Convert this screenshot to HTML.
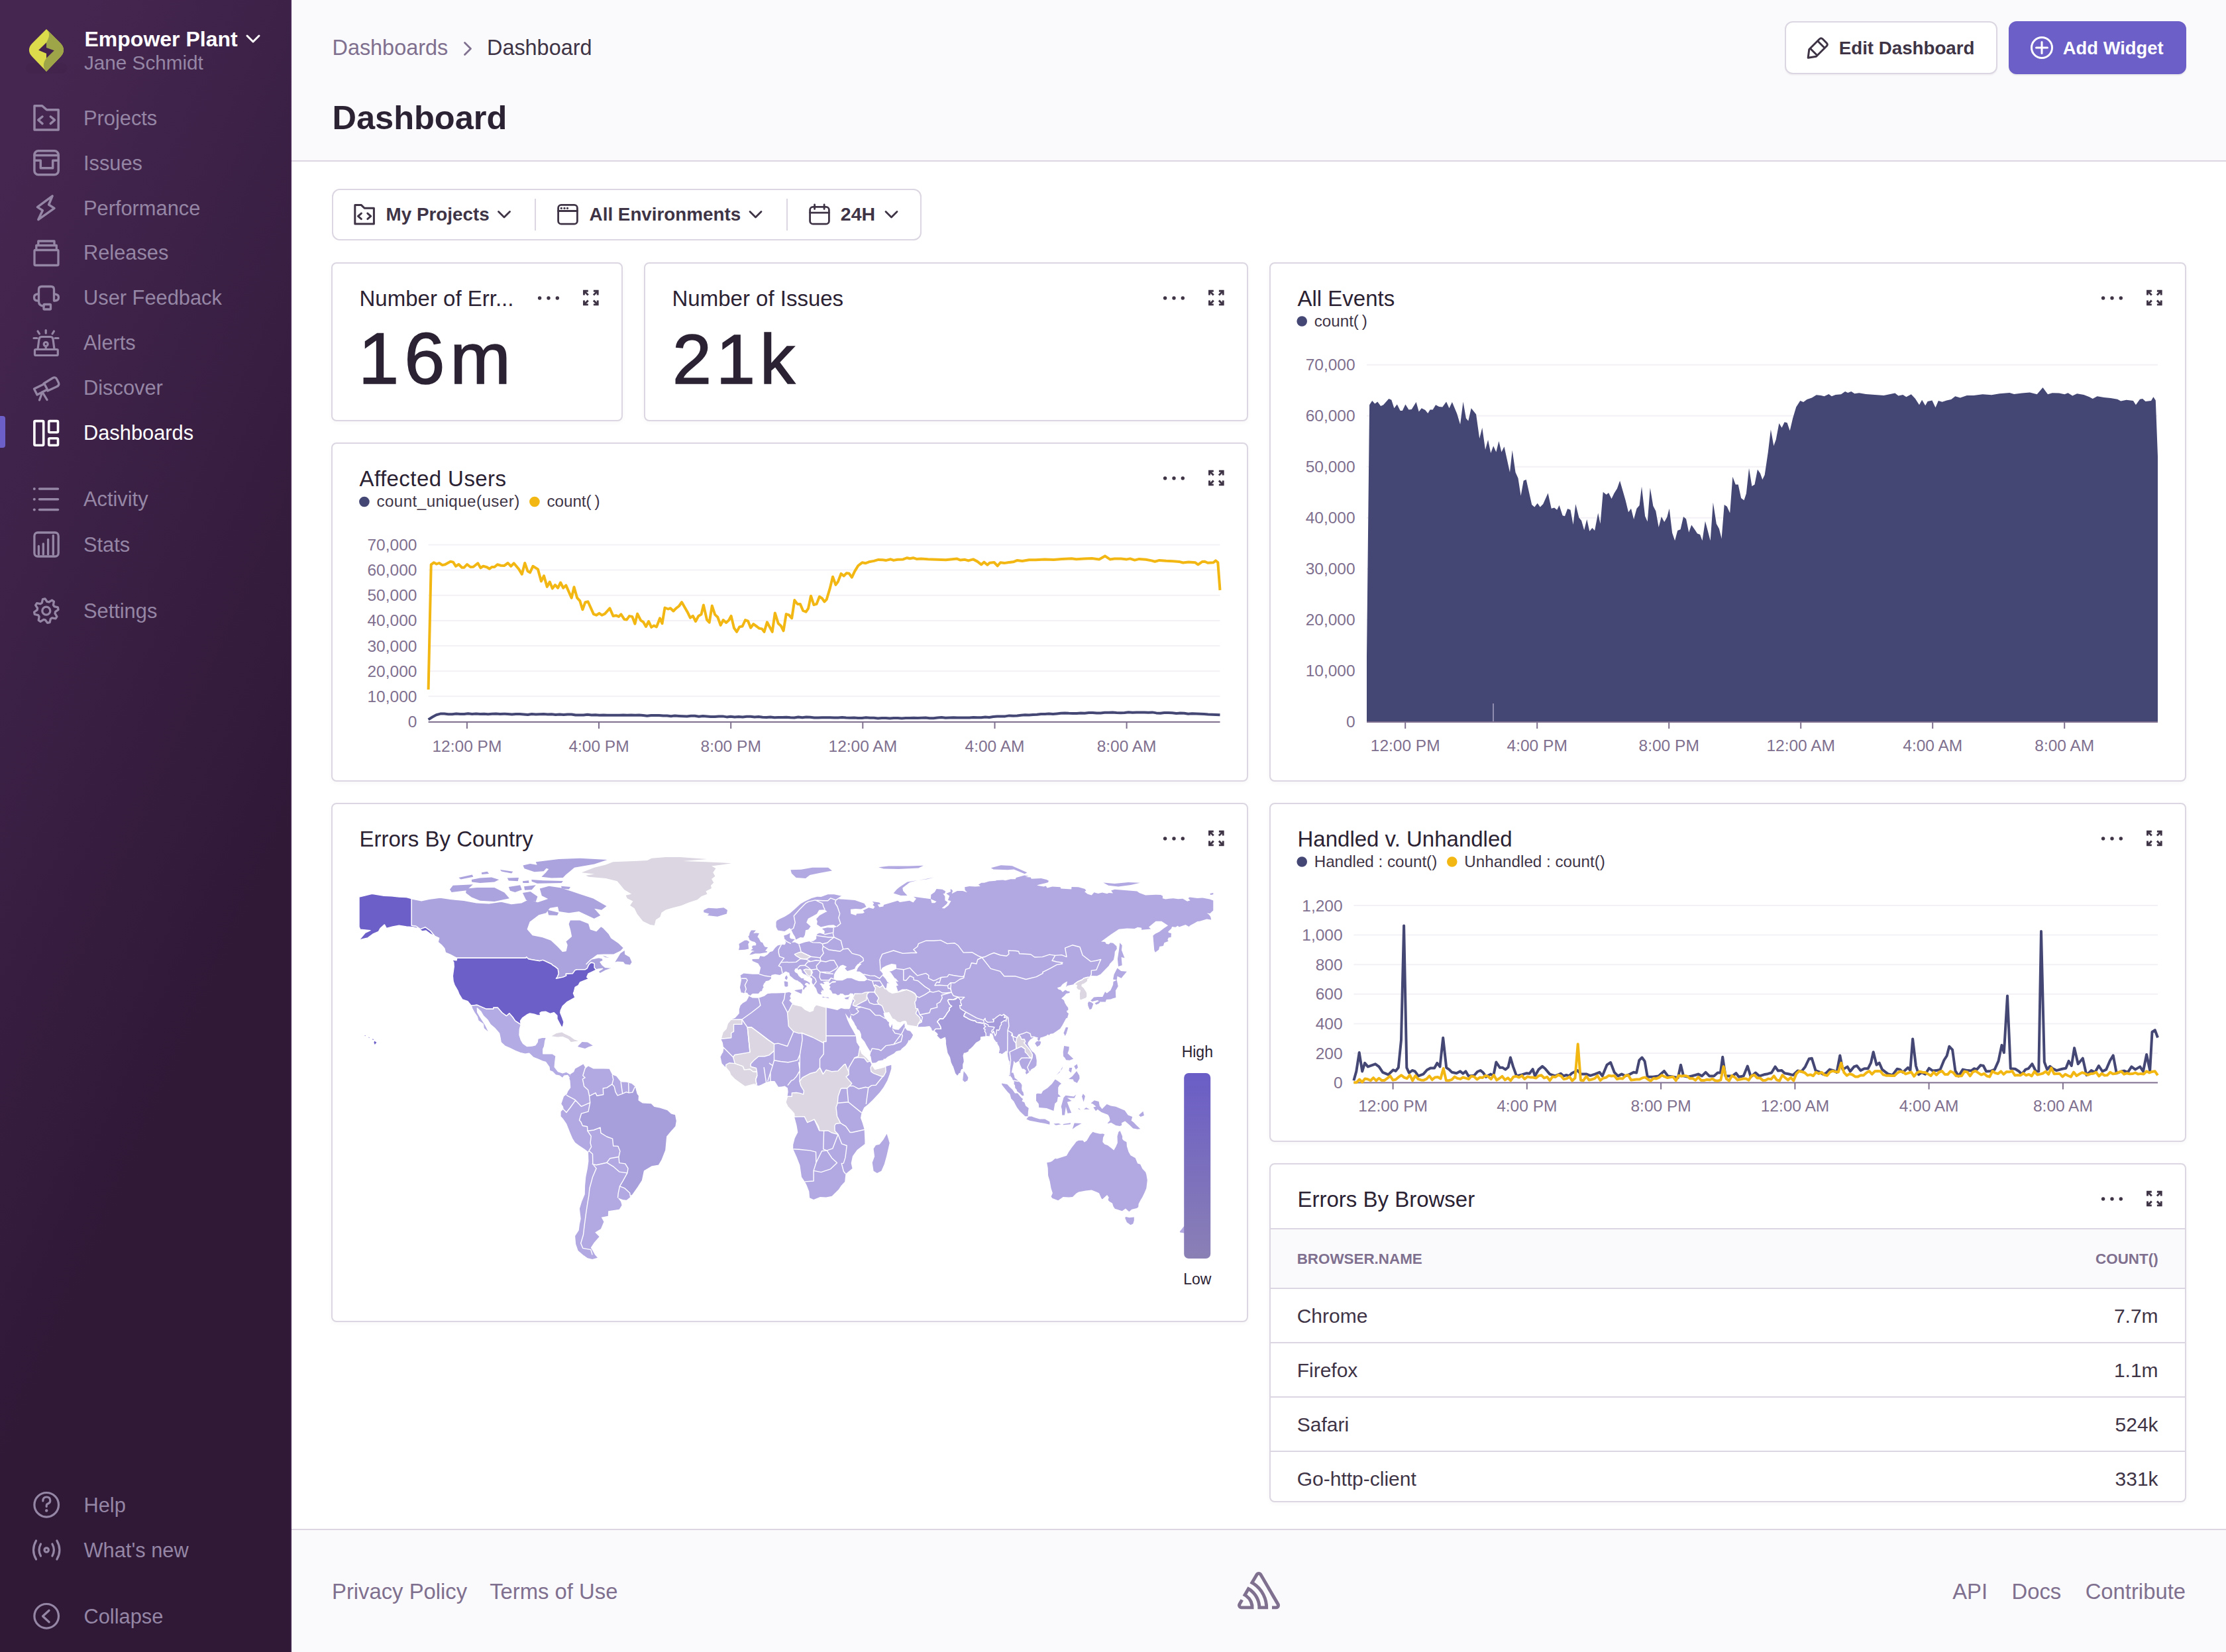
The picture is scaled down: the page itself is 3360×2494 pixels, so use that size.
<!DOCTYPE html><html><head><meta charset="utf-8"><style>
html,body{margin:0;padding:0;width:3360px;height:2494px;overflow:hidden;background:#fff;}
body{position:relative;font-family:"Liberation Sans",sans-serif;}
.t{position:absolute;white-space:nowrap;}
.card{position:absolute;box-sizing:border-box;border:2px solid #DBD6E1;border-radius:8px;background:#fff;box-shadow:0 2px 7px rgba(0,0,0,0.035);}
svg{position:absolute;left:0;top:0;}
</style></head><body>
<div style="position:absolute;left:0px;top:0px;width:440px;height:2494px;box-sizing:border-box;background:linear-gradient(294.17deg,#2f1937 35.57%,#452650 92.42%,#452650 92.42%);"></div>
<div style="position:absolute;left:438px;top:0px;width:2px;height:2494px;box-sizing:border-box;background:rgba(90,50,110,0.35);"></div>
<div style="position:absolute;left:440px;top:0px;width:2920px;height:242px;box-sizing:border-box;background:#FAF9FB;border-bottom:2px solid #DBD6E1;height:244px;"></div>
<div style="position:absolute;left:440px;top:2308px;width:2920px;height:186px;box-sizing:border-box;background:#FAF9FB;border-top:2px solid #DBD6E1;"></div>
<div class="t" style="left:127.5px;top:43.1px;font-size:32px;line-height:32px;color:#FFFFFF;font-weight:700;">Empower Plant</div>
<div class="t" style="left:127.0px;top:79.9px;font-size:29.7px;line-height:29.7px;color:#9586A5;font-weight:400;">Jane Schmidt</div>
<div class="t" style="left:126.0px;top:163.6px;font-size:30.8px;line-height:30.8px;color:#9586A5;font-weight:400;">Projects</div>
<div class="t" style="left:126.0px;top:231.6px;font-size:30.8px;line-height:30.8px;color:#9586A5;font-weight:400;">Issues</div>
<div class="t" style="left:126.0px;top:299.5px;font-size:30.8px;line-height:30.8px;color:#9586A5;font-weight:400;">Performance</div>
<div class="t" style="left:126.0px;top:367.4px;font-size:30.8px;line-height:30.8px;color:#9586A5;font-weight:400;">Releases</div>
<div class="t" style="left:126.0px;top:435.4px;font-size:30.8px;line-height:30.8px;color:#9586A5;font-weight:400;">User Feedback</div>
<div class="t" style="left:126.0px;top:503.3px;font-size:30.8px;line-height:30.8px;color:#9586A5;font-weight:400;">Alerts</div>
<div class="t" style="left:126.0px;top:571.3px;font-size:30.8px;line-height:30.8px;color:#9586A5;font-weight:400;">Discover</div>
<div class="t" style="left:126.0px;top:639.2px;font-size:30.8px;line-height:30.8px;color:#FFFFFF;font-weight:400;">Dashboards</div>
<div class="t" style="left:126.0px;top:739.4px;font-size:30.8px;line-height:30.8px;color:#9586A5;font-weight:400;">Activity</div>
<div class="t" style="left:126.0px;top:807.5px;font-size:30.8px;line-height:30.8px;color:#9586A5;font-weight:400;">Stats</div>
<div class="t" style="left:126.0px;top:907.8px;font-size:30.8px;line-height:30.8px;color:#9586A5;font-weight:400;">Settings</div>
<div class="t" style="left:126.5px;top:2257.5px;font-size:30.8px;line-height:30.8px;color:#9586A5;font-weight:400;">Help</div>
<div class="t" style="left:126.5px;top:2325.7px;font-size:30.8px;line-height:30.8px;color:#9586A5;font-weight:400;">What's new</div>
<div class="t" style="left:126.5px;top:2425.5px;font-size:30.8px;line-height:30.8px;color:#9586A5;font-weight:400;">Collapse</div>
<div style="position:absolute;left:0px;top:628px;width:8px;height:48px;box-sizing:border-box;background:#6C5FC7;border-radius:0 4px 4px 0;"></div>
<div class="t" style="left:501.5px;top:56.3px;font-size:32.4px;line-height:32.4px;color:#80708F;font-weight:400;">Dashboards</div>
<div class="t" style="left:735.0px;top:56.3px;font-size:32.4px;line-height:32.4px;color:#3E3446;font-weight:400;">Dashboard</div>
<div class="t" style="left:501.5px;top:152.6px;font-size:50.5px;line-height:50.5px;color:#2B2233;font-weight:700;">Dashboard</div>
<div style="position:absolute;left:2694px;top:32px;width:321px;height:80px;box-sizing:border-box;background:#fff;border:2px solid #DBD6E1;border-radius:12px;box-shadow:0 2px 2px rgba(43,34,51,0.04);"></div>
<div class="t" style="left:2775.8px;top:59.2px;font-size:27.7px;line-height:27.7px;color:#3E3446;font-weight:700;">Edit Dashboard</div>
<div style="position:absolute;left:3032px;top:32px;width:268px;height:80px;box-sizing:border-box;background:#6C5FC7;border:2px solid #6C5FC7;border-radius:12px;box-shadow:0 2px 2px rgba(43,34,51,0.08);"></div>
<div class="t" style="left:3113.8px;top:59.4px;font-size:27.4px;line-height:27.4px;color:#FFFFFF;font-weight:700;">Add Widget</div>
<div style="position:absolute;left:501px;top:285px;width:890px;height:78px;box-sizing:border-box;border:2px solid #DBD6E1;border-radius:12px;background:#fff;"></div>
<div style="position:absolute;left:807px;top:300px;width:2px;height:48px;box-sizing:border-box;background:#DBD6E1;"></div>
<div style="position:absolute;left:1187px;top:300px;width:2px;height:48px;box-sizing:border-box;background:#DBD6E1;"></div>
<div class="t" style="left:582.6px;top:310.0px;font-size:27.8px;line-height:27.8px;color:#3E3446;font-weight:700;">My Projects</div>
<div class="t" style="left:889.6px;top:310.0px;font-size:27.8px;line-height:27.8px;color:#3E3446;font-weight:700;">All Environments</div>
<div class="t" style="left:1268.8px;top:309.4px;font-size:28.5px;line-height:28.5px;color:#3E3446;font-weight:700;">24H</div>
<div class="card" style="left:500px;top:396px;width:440px;height:240px;"></div>
<div class="card" style="left:972px;top:396px;width:912px;height:240px;"></div>
<div class="card" style="left:1916px;top:396px;width:1384px;height:784px;"></div>
<div class="card" style="left:500px;top:668px;width:1384px;height:512px;"></div>
<div class="card" style="left:500px;top:1212px;width:1384px;height:784px;"></div>
<div class="card" style="left:1916px;top:1212px;width:1384px;height:512px;"></div>
<div class="card" style="left:1916px;top:1756px;width:1384px;height:512px;"></div>
<div class="t" style="left:542.5px;top:434.1px;font-size:33px;line-height:33px;color:#2B2233;font-weight:400;">Number of Err...</div>
<div class="t" style="left:1014.5px;top:434.1px;font-size:33px;line-height:33px;color:#2B2233;font-weight:400;">Number of Issues</div>
<div class="t" style="left:1958.5px;top:434.1px;font-size:33px;line-height:33px;color:#2B2233;font-weight:400;">All Events</div>
<div class="t" style="left:542.5px;top:706.1px;font-size:33px;line-height:33px;color:#2B2233;font-weight:400;letter-spacing:0.44px;">Affected Users</div>
<div class="t" style="left:542.5px;top:1250.1px;font-size:33px;line-height:33px;color:#2B2233;font-weight:400;">Errors By Country</div>
<div class="t" style="left:1958.5px;top:1250.1px;font-size:33px;line-height:33px;color:#2B2233;font-weight:400;">Handled v. Unhandled</div>
<div class="t" style="left:1958.5px;top:1794.1px;font-size:33px;line-height:33px;color:#2B2233;font-weight:400;">Errors By Browser</div>
<div class="t" style="left:541.0px;top:485.9px;font-size:110px;line-height:110px;color:#2B2233;font-weight:400;letter-spacing:8px;-webkit-text-stroke:1.6px #2B2233;">16m</div>
<div class="t" style="left:1015.0px;top:489.3px;font-size:106px;line-height:106px;color:#2B2233;font-weight:400;letter-spacing:7px;-webkit-text-stroke:1.6px #2B2233;">21k</div>
<div style="position:absolute;left:1918px;top:1854px;width:1380px;height:92px;box-sizing:border-box;background:#FAF9FB;border-top:2px solid #DBD6E1;border-bottom:2px solid #DBD6E1;"></div>
<div style="position:absolute;left:1918px;top:2026px;width:1380px;height:2px;box-sizing:border-box;background:#DBD6E1;"></div>
<div style="position:absolute;left:1918px;top:2108px;width:1380px;height:2px;box-sizing:border-box;background:#DBD6E1;"></div>
<div style="position:absolute;left:1918px;top:2190px;width:1380px;height:2px;box-sizing:border-box;background:#DBD6E1;"></div>
<div class="t" style="left:1957.7px;top:1889.6px;font-size:22.4px;line-height:22.4px;color:#80708F;font-weight:700;">BROWSER.NAME</div>
<div class="t" style="right:102.4px;top:1889.6px;font-size:22.4px;line-height:22.4px;color:#80708F;font-weight:700;">COUNT()</div>
<div class="t" style="left:1957.7px;top:1972.4px;font-size:30px;line-height:30px;color:#3E3446;font-weight:400;">Chrome</div>
<div class="t" style="right:102.4px;top:1972.4px;font-size:30px;line-height:30px;color:#3E3446;font-weight:400;">7.7m</div>
<div class="t" style="left:1957.7px;top:2054.2px;font-size:30px;line-height:30px;color:#3E3446;font-weight:400;">Firefox</div>
<div class="t" style="right:102.4px;top:2054.2px;font-size:30px;line-height:30px;color:#3E3446;font-weight:400;">1.1m</div>
<div class="t" style="left:1957.7px;top:2136.0px;font-size:30px;line-height:30px;color:#3E3446;font-weight:400;">Safari</div>
<div class="t" style="right:102.4px;top:2136.0px;font-size:30px;line-height:30px;color:#3E3446;font-weight:400;">524k</div>
<div class="t" style="left:1957.7px;top:2217.8px;font-size:30px;line-height:30px;color:#3E3446;font-weight:400;">Go-http-client</div>
<div class="t" style="right:102.4px;top:2217.8px;font-size:30px;line-height:30px;color:#3E3446;font-weight:400;">331k</div>
<div class="t" style="left:501.0px;top:2386.7px;font-size:32.8px;line-height:32.8px;color:#80708F;font-weight:400;">Privacy Policy</div>
<div class="t" style="left:739.2px;top:2386.7px;font-size:32.8px;line-height:32.8px;color:#80708F;font-weight:400;">Terms of Use</div>
<div class="t" style="right:61.0px;top:2386.7px;font-size:32.8px;line-height:32.8px;color:#80708F;font-weight:400;">API&nbsp;&nbsp;&nbsp;&nbsp;Docs&nbsp;&nbsp;&nbsp;&nbsp;Contribute</div>
<svg width="3360" height="2494" viewBox="0 0 3360 2494">
<g>
<defs><clipPath id="mapclip"><rect x="542" y="1280" width="1300" height="650"/></clipPath><linearGradient id="lg" x1="0" y1="0" x2="0" y2="1"><stop offset="0" stop-color="#6A5DC6"/><stop offset="1" stop-color="#8B80B5"/></linearGradient></defs>
<g clip-path="url(#mapclip)" stroke="#FFFFFF" stroke-width="1.4" stroke-linejoin="round">
<path d="M621.1,1356.7L636.2,1359.8L647.5,1357.2L664.5,1355.0L681.5,1357.6L700.3,1359.3L719.2,1362.8L738.0,1363.7L756.9,1361.1L771.9,1364.6L787.0,1362.8L798.3,1357.2L811.5,1361.5L828.5,1355.9L843.6,1361.5L845.4,1368.9L830.4,1371.5L824.7,1378.9L813.4,1382.0L800.2,1392.0L796.4,1402.8L804.0,1411.5L819.1,1414.6L832.2,1419.4L842.4,1429.0L849.2,1436.3L854.1,1435.5L856.0,1426.8L853.7,1421.1L862.4,1413.7L860.5,1404.2L857.9,1395.0L860.5,1388.5L875.6,1388.9L888.8,1394.2L891.4,1402.8L900.1,1405.5L906.9,1398.5L910.7,1400.7L919.0,1409.4L922.7,1415.9L934.0,1423.7L941.6,1431.1L937.1,1435.9L926.5,1441.1L911.4,1441.1L902.0,1441.6L890.7,1449.8L885.0,1455.5L892.6,1448.1L903.9,1445.5L909.5,1447.2L910.3,1450.3L906.1,1452.4L908.8,1456.4L913.3,1460.3L920.8,1461.1L926.5,1459.4L922.0,1462.4L913.3,1465.5L905.4,1469.8L903.1,1466.4L909.5,1462.4L902.0,1463.3L900.1,1464.2L900.1,1464.2L897.1,1460.7L897.1,1455.0L895.6,1453.7L891.8,1453.3L888.8,1456.4L886.2,1462.0L883.1,1463.8L871.1,1463.8L868.1,1464.6L864.3,1469.8L854.1,1470.3L854.9,1472.9L850.0,1475.1L839.4,1477.2L841.3,1474.6L843.2,1469.8L842.1,1462.9L837.9,1459.4L834.1,1457.2L832.6,1455.5L819.4,1449.4L814.9,1450.7L804.0,1449.0L797.6,1447.7L794.6,1444.8L793.8,1446.3L738.0,1446.3L689.7,1446.3L689.7,1446.3L685.2,1444.2L679.6,1441.1L672.4,1438.1L670.9,1432.0L666.4,1426.8L661.1,1422.4L662.6,1416.3L662.6,1416.3L656.2,1413.3L649.8,1405.5L641.9,1399.8L634.3,1402.8L628.3,1398.5L621.1,1397.2L621.1,1356.7Z" fill="#ABA3DE"/>
<path d="M928.4,1452.4L936.7,1439.0L942.7,1435.0L943.1,1440.7L950.3,1445.0L953.6,1452.4L951.0,1456.4L943.5,1455.5L940.8,1452.0L931.8,1451.6Z" fill="#ABA3DE" stroke="none"/>
<path d="M909.5,1442.4L919.7,1445.9L913.3,1445.0Z" fill="#ABA3DE" stroke="none"/>
<path d="M808.8,1301.2L843.3,1296.9L875.6,1295.8L916.6,1297.9L897.2,1304.4L867.0,1309.8L860.5,1315.2L854.1,1320.6L849.8,1324.9L832.5,1325.5L817.4,1323.8L823.9,1317.3L828.2,1312.0L810.9,1306.6Z" fill="#ABA3DE" stroke="none"/>
<path d="M789.4,1306.6L800.2,1304.0L815.3,1306.6L825.0,1310.4L820.6,1315.2L806.6,1316.3L791.5,1311.3Z" fill="#ABA3DE" stroke="none"/>
<path d="M754.9,1313.0L774.3,1315.8L772.1,1318.4L757.0,1315.6Z" fill="#ABA3DE" stroke="none"/>
<path d="M726.8,1317.3L735.5,1315.8L738.1,1319.1L727.3,1319.9Z" fill="#ABA3DE" stroke="none"/>
<path d="M692.3,1324.9L712.8,1320.6L714.3,1323.8L695.6,1327.5Z" fill="#ABA3DE" stroke="none"/>
<path d="M711.8,1328.1L724.7,1325.5L741.9,1324.5L753.2,1328.1L746.3,1331.4L724.7,1332.9L712.2,1331.4Z" fill="#ABA3DE" stroke="none"/>
<path d="M765.7,1325.5L782.9,1325.1L781.8,1330.3L767.8,1329.6Z" fill="#ABA3DE" stroke="none"/>
<path d="M788.9,1330.3L798.0,1329.2L798.4,1332.9L789.4,1332.9Z" fill="#ABA3DE" stroke="none"/>
<path d="M802.3,1328.1L819.6,1329.2L849.8,1329.9L847.6,1332.9L810.9,1333.7L802.7,1330.7Z" fill="#ABA3DE" stroke="none"/>
<path d="M683.7,1336.8L713.9,1335.2L704.2,1344.3L681.6,1346.9L679.0,1342.8Z" fill="#ABA3DE" stroke="none"/>
<path d="M704.2,1341.5L720.4,1340.0L746.3,1340.0L761.3,1347.5L768.9,1356.2L746.3,1360.9L724.7,1359.8L711.8,1354.4L703.1,1348.0Z" fill="#ABA3DE" stroke="none"/>
<path d="M767.8,1338.9L785.1,1336.3L787.7,1343.2L777.5,1346.9L770.0,1344.7Z" fill="#ABA3DE" stroke="none"/>
<path d="M791.1,1338.3L808.8,1336.3L802.7,1343.2L792.0,1343.7Z" fill="#ABA3DE" stroke="none"/>
<path d="M788.9,1348.0L800.6,1346.0L811.4,1353.6L808.8,1360.9L794.1,1358.7Z" fill="#ABA3DE" stroke="none"/>
<path d="M814.8,1341.5L828.6,1337.8L845.9,1340.2L863.1,1345.8L875.6,1350.1L895.5,1356.6L915.5,1368.0L908.0,1373.8L897.2,1371.7L906.3,1382.0L896.8,1386.8L873.9,1376.0L858.8,1378.2L843.7,1376.0L841.6,1367.4L830.8,1358.7L817.8,1352.3Z" fill="#ABA3DE" stroke="none"/>
<path d="M847.2,1337.8L861.0,1338.9L858.8,1342.4L847.6,1341.5Z" fill="#ABA3DE" stroke="none"/>
<path d="M826.0,1373.4L843.3,1377.7L841.1,1382.0L828.2,1381.6Z" fill="#ABA3DE" stroke="none"/>
<path d="M689.7,1446.3L738.0,1446.3L793.8,1446.3L794.6,1444.8L797.6,1447.7L804.0,1449.0L814.9,1450.7L819.4,1449.4L832.6,1455.5L834.1,1457.2L837.9,1459.4L842.1,1462.9L843.2,1469.8L841.3,1474.6L839.4,1477.2L850.0,1475.1L854.9,1472.9L854.1,1470.3L864.3,1469.8L868.1,1464.6L871.1,1463.8L883.1,1463.8L886.2,1462.0L888.8,1456.4L891.8,1453.3L895.6,1453.7L897.1,1455.0L897.1,1460.7L900.1,1464.2L900.1,1464.2L894.5,1466.8L888.0,1469.8L885.8,1475.1L888.8,1477.7L883.1,1479.8L875.6,1482.9L873.0,1487.7L868.1,1490.3L866.6,1496.4L865.4,1499.4L868.1,1505.9L862.4,1509.0L855.6,1512.9L849.2,1519.0L846.2,1525.5L845.8,1529.0L848.8,1536.4L851.1,1542.9L849.6,1549.9L847.3,1550.3L844.3,1544.7L840.9,1538.1L840.9,1533.3L836.0,1528.6L830.4,1530.3L824.0,1527.3L817.2,1527.7L814.9,1529.4L816.0,1532.9L811.5,1532.9L806.6,1531.2L799.8,1529.9L795.3,1532.0L788.5,1536.8L785.5,1541.2L786.3,1546.8L786.3,1546.8L777.6,1541.2L773.8,1535.5L768.9,1529.9L764.4,1533.8L758.0,1529.0L751.2,1521.2L744.8,1521.2L744.8,1523.3L734.2,1523.3L720.3,1517.3L711.2,1518.1L711.2,1518.1L706.0,1511.6L698.0,1509.0L693.1,1501.2L690.9,1495.5L686.0,1487.2L684.1,1481.2L683.3,1473.3L685.2,1459.4L684.8,1452.9L682.6,1449.0L689.0,1449.8L689.7,1446.3Z" fill="#6C5FC7"/>
<path d="M662.6,1416.3L656.9,1413.7L649.4,1409.8L643.0,1405.0L637.3,1405.9L630.6,1401.5L623.0,1399.8L613.6,1398.9L602.3,1397.2L592.9,1398.9L583.4,1401.5L580.4,1395.9L574.0,1401.5L571.4,1406.3L562.7,1410.2L555.2,1415.9L547.6,1417.6L542.0,1419.4L551.4,1408.1L558.9,1404.6L543.8,1403.3L542.0,1399.4L542.0,1354.1L549.5,1352.4L561.6,1349.3L572.1,1351.1L579.7,1352.4L591.0,1352.8L602.3,1354.1L613.6,1354.6L621.1,1356.7L621.1,1356.7L621.1,1397.2L628.3,1398.5L634.3,1402.8L641.9,1399.8L649.8,1405.5L656.2,1413.3L662.6,1416.3Z" fill="#6C5FC7"/>
<path d="M711.2,1518.1L720.3,1517.3L734.2,1523.3L744.8,1523.3L744.8,1521.2L751.2,1521.2L758.0,1529.0L764.4,1533.8L768.9,1529.9L773.8,1535.5L777.6,1541.2L786.3,1546.8L786.3,1546.8L784.4,1553.8L784.0,1562.5L786.3,1569.9L789.6,1575.5L795.3,1579.5L802.8,1579.0L808.1,1577.7L811.1,1573.4L811.9,1568.2L818.3,1566.4L824.7,1566.0L822.8,1571.6L821.7,1579.5L819.8,1583.8L819.8,1590.8L826.2,1590.8L834.1,1590.8L839.0,1594.2L837.9,1603.0L837.2,1610.8L842.4,1617.7L849.2,1619.9L854.9,1618.2L860.9,1621.7L861.7,1625.6L859.4,1627.3L856.8,1623.4L851.5,1624.3L849.2,1627.7L844.7,1624.3L838.7,1623.0L834.1,1618.2L829.6,1616.4L828.9,1610.8L823.6,1603.4L819.1,1602.1L811.5,1599.0L805.1,1596.4L798.7,1590.3L792.7,1591.2L785.1,1589.5L777.6,1586.4L768.9,1582.1L762.5,1579.5L756.1,1573.4L755.0,1566.8L753.5,1559.9L747.4,1552.9L740.3,1546.8L735.7,1539.4L729.7,1533.8L725.9,1527.3L720.3,1522.0L720.7,1528.1L724.8,1535.1L729.3,1542.0L733.1,1548.1L736.5,1555.1L738.4,1559.5L735.7,1557.3L730.1,1552.5L729.3,1546.0L721.8,1540.7L720.3,1535.1L716.1,1529.0L712.7,1522.5L711.2,1518.1Z" fill="#B3ABE3"/>
<path d="M877.8,1317.3L897.2,1309.8L914.4,1305.5L925.2,1301.2L957.6,1300.1L977.0,1299.0L983.5,1295.8L1005.0,1294.1L1026.6,1294.1L1067.5,1296.9L1030.9,1300.1L1065.4,1301.2L1087.0,1302.3L1104.2,1303.3L1089.1,1305.5L1074.0,1307.6L1080.5,1310.9L1076.2,1317.3L1079.4,1322.7L1074.0,1327.0L1077.3,1332.4L1072.9,1336.8L1074.0,1341.1L1065.4,1345.4L1067.5,1349.7L1058.9,1352.9L1052.5,1358.3L1039.5,1362.6L1028.7,1366.9L1015.8,1370.2L1005.0,1373.4L998.5,1377.7L996.4,1384.2L989.9,1388.5L987.8,1397.1L981.3,1396.1L970.5,1390.7L961.9,1379.9L957.6,1371.3L951.1,1366.9L955.4,1360.5L946.8,1356.2L944.6,1351.8L953.3,1349.7L942.5,1343.2L931.7,1330.3L914.4,1326.0L888.6,1323.8L884.3,1321.7L897.2,1319.5Z" fill="#DBD6E1" stroke="none"/>
<path d="M1062.2,1374.1L1069.0,1370.7L1081.8,1371.5L1092.4,1370.2L1098.0,1374.1L1096.9,1379.4L1083.0,1383.7L1067.9,1382.0L1070.5,1379.4L1062.2,1377.2Z" fill="#B2A9E2" stroke="none"/>
<path d="M832.6,1564.2L839.8,1559.9L848.1,1558.6L853.0,1561.2L860.5,1564.7L866.9,1569.5L873.0,1571.6L861.7,1572.9L857.9,1568.6L849.2,1564.7L841.7,1565.5L832.6,1564.2Z" fill="#DBD6E1" stroke="none"/>
<path d="M872.2,1579.5L878.6,1572.9L886.9,1573.4L894.8,1578.6L888.8,1580.3L883.1,1582.9L872.6,1580.3Z" fill="#B2A9E2" stroke="none"/>
<path d="M860.9,1621.7L866.2,1618.2L868.1,1613.4L873.0,1610.8L880.5,1606.4L883.5,1611.7L881.6,1614.7L888.0,1609.5L895.6,1613.4L903.1,1613.4L911.4,1613.4L919.7,1613.8L924.2,1622.5L930.3,1624.7L937.1,1633.4L945.4,1633.8L953.6,1636.0L959.7,1641.2L962.3,1651.2L964.6,1654.3L964.2,1660.8L969.9,1664.7L983.1,1665.6L988.0,1670.4L996.6,1672.1L1007.6,1675.6L1013.2,1680.8L1019.6,1682.6L1021.5,1692.1L1020.0,1700.8L1013.2,1708.2L1006.8,1716.0L1004.9,1736.5L998.9,1751.7L994.4,1759.1L984.2,1760.9L972.5,1767.8L969.5,1782.2L963.1,1792.2L955.2,1803.5L951.0,1807.4L945.7,1811.8L940.4,1811.3L932.5,1808.3L937.1,1813.9L938.6,1819.6L934.8,1825.7L918.2,1828.3L917.8,1835.7L907.7,1837.8L911.4,1844.4L906.9,1855.2L898.2,1860.5L904.6,1867.0L896.7,1876.1L891.8,1883.5L894.5,1887.9L898.2,1894.4L902.0,1898.8L894.1,1900.9L886.9,1899.2L880.1,1894.4L872.6,1887.9L869.2,1878.3L868.1,1866.1L873.7,1857.4L874.9,1848.3L876.7,1840.0L874.9,1824.8L878.2,1813.9L882.8,1803.0L883.1,1790.0L884.3,1777.0L886.9,1763.9L888.4,1753.0L888.0,1739.1L883.1,1735.2L873.7,1729.1L868.1,1724.8L864.3,1718.7L860.9,1710.8L855.2,1696.5L850.0,1689.1L846.6,1685.2L846.6,1678.2L850.7,1674.3L850.0,1670.4L847.3,1666.5L850.0,1658.6L851.1,1655.2L855.6,1651.7L857.5,1647.3L861.3,1642.1L860.5,1631.2L859.4,1628.2Z" fill="#B2A9E2" stroke="none"/>
<path d="M958.2,1641.2L959.7,1641.2L962.3,1651.2L964.6,1654.3L964.2,1660.8L969.9,1664.7L983.1,1665.6L988.0,1670.4L996.6,1672.1L1007.6,1675.6L1013.2,1680.8L1019.6,1682.6L1021.5,1692.1L1020.0,1700.8L1013.2,1708.2L1006.8,1716.0L1004.9,1736.5L998.9,1751.7L994.4,1759.1L984.2,1760.9L972.5,1767.8L969.5,1782.2L963.1,1792.2L955.2,1803.5L951.4,1806.1L950.6,1800.9L943.1,1793.9L935.5,1790.9L940.4,1782.6L946.9,1770.9L948.0,1763.9L943.8,1756.9L934.8,1755.6L934.0,1746.5L935.9,1737.8L932.9,1730.4L925.7,1730.0L924.6,1719.1L915.9,1716.0L906.9,1710.4L906.1,1702.1L896.3,1706.0L886.9,1707.3L886.5,1700.8L879.4,1699.5L876.7,1693.4L874.5,1691.3L877.5,1681.2L888.0,1678.2L890.7,1664.7L889.6,1654.7L899.0,1649.9L900.9,1654.3L910.7,1652.5L910.3,1643.0L915.9,1642.1L923.9,1636.9L926.5,1639.5L927.3,1640.8L929.1,1648.6L932.2,1653.8L939.7,1651.2L945.4,1648.6L949.1,1649.9L954.8,1649.1Z" fill="#A79EDC"/>
<path d="M1130.5,1503.8L1135.7,1506.4L1145.2,1506.8L1153.8,1503.8L1158.4,1500.3L1164.8,1499.4L1171.5,1499.4L1185.1,1499.0L1191.2,1497.7L1194.5,1499.4L1192.3,1504.2L1193.8,1507.2L1191.2,1510.3L1195.3,1514.6L1199.8,1516.8L1210.4,1519.4L1214.9,1523.8L1222.4,1527.3L1227.3,1525.5L1228.5,1520.7L1231.9,1516.8L1240.2,1519.0L1247.0,1521.2L1256.4,1523.3L1263.9,1525.1L1269.6,1522.0L1274.5,1523.3L1281.6,1523.3L1284.3,1531.2L1282.0,1538.1L1275.6,1529.4L1279.0,1539.4L1282.8,1547.7L1287.3,1555.5L1291.8,1563.8L1292.9,1573.4L1297.8,1581.2L1300.9,1590.3L1308.0,1596.4L1312.9,1602.1L1315.9,1607.7L1320.8,1614.3L1328.4,1612.5L1336.7,1610.3L1345.3,1607.7L1345.3,1613.4L1342.7,1622.1L1339.3,1631.2L1333.7,1641.2L1328.0,1649.1L1317.1,1660.8L1310.3,1667.3L1304.3,1672.1L1300.5,1679.9L1299.0,1687.8L1301.6,1694.7L1304.6,1704.7L1305.4,1721.7L1305.4,1726.9L1293.7,1736.1L1286.9,1745.6L1284.7,1756.1L1286.5,1763.9L1276.4,1772.2L1275.2,1783.9L1269.6,1790.0L1265.8,1795.7L1255.6,1805.7L1247.0,1807.4L1237.9,1807.0L1228.1,1810.9L1222.1,1808.3L1221.3,1798.7L1217.5,1789.1L1214.9,1783.9L1210.0,1777.0L1207.4,1759.1L1202.5,1746.5L1197.2,1734.8L1197.2,1728.2L1199.8,1718.2L1204.3,1709.5L1202.5,1698.7L1199.1,1686.0L1198.7,1681.2L1194.5,1676.5L1188.9,1670.4L1185.9,1664.3L1188.5,1655.2L1189.6,1648.2L1188.9,1642.5L1184.7,1639.5L1179.5,1640.4L1174.9,1640.8L1169.3,1632.1L1162.9,1632.1L1156.5,1633.8L1148.6,1637.8L1145.2,1639.1L1137.6,1636.9L1124.4,1640.4L1117.6,1635.6L1109.7,1629.9L1102.9,1623.0L1101.1,1618.2L1095.8,1611.7L1089.7,1605.6L1087.5,1595.6L1090.5,1589.5L1092.0,1581.2L1090.9,1574.2L1088.2,1568.2L1091.2,1558.1L1096.2,1552.9L1098.4,1545.1L1103.3,1539.4L1109.7,1536.8L1115.8,1529.9L1115.8,1523.8L1117.6,1518.1L1121.0,1514.6L1126.7,1511.2L1129.3,1506.8Z" fill="#B2A9E2" stroke="none"/>
<path d="M1338.6,1711.7L1342.7,1725.6L1340.8,1733.9L1338.2,1745.2L1334.8,1757.4L1330.3,1767.8L1323.9,1770.9L1318.6,1767.8L1316.7,1755.2L1320.1,1746.1L1318.6,1734.3L1322.0,1729.1L1327.6,1727.8L1333.3,1720.8L1338.6,1711.7Z" fill="#B2A9E2" stroke="none"/>
<path d="M1118.8,1498.5L1116.9,1490.7L1119.1,1479.0L1117.6,1472.5L1122.5,1469.4L1135.7,1470.7L1145.9,1470.7L1148.2,1460.7L1144.4,1454.6L1135.7,1450.7L1135.4,1448.1L1145.5,1447.7L1147.4,1443.3L1153.5,1444.2L1158.7,1441.1L1162.1,1437.2L1166.3,1435.9L1170.0,1431.1L1173.8,1427.6L1179.5,1425.9L1184.7,1426.3L1186.3,1422.9L1184.4,1418.1L1183.2,1412.4L1188.1,1411.1L1192.7,1408.5L1191.9,1415.0L1193.8,1417.2L1199.8,1418.1L1194.9,1422.9L1199.8,1422.4L1205.9,1425.5L1214.9,1422.4L1222.4,1421.1L1227.7,1420.7L1232.2,1417.6L1232.2,1412.4L1234.1,1409.8L1237.5,1408.5L1244.3,1410.7L1244.7,1405.5L1240.9,1402.0L1248.8,1400.2L1258.3,1400.7L1263.2,1398.9L1258.3,1396.3L1250.7,1396.8L1239.0,1399.4L1233.0,1395.5L1233.8,1391.1L1232.2,1387.2L1237.1,1382.0L1245.8,1377.2L1248.5,1376.3L1245.1,1373.3L1236.4,1373.7L1233.0,1379.4L1227.3,1382.8L1219.8,1386.8L1217.2,1392.8L1223.6,1398.5L1220.2,1403.3L1216.0,1404.2L1214.9,1411.5L1212.6,1415.5L1208.1,1415.0L1201.3,1418.5L1200.2,1414.6L1197.2,1409.8L1194.2,1403.3L1191.9,1401.1L1184.4,1405.9L1174.2,1404.6L1171.5,1399.4L1171.5,1392.0L1172.7,1389.8L1177.2,1387.2L1184.7,1383.7L1192.3,1378.9L1199.4,1372.8L1208.5,1364.6L1214.5,1361.1L1225.1,1355.9L1233.4,1353.7L1239.4,1354.1L1249.6,1350.2L1259.0,1350.2L1270.7,1352.8L1265.8,1357.2L1277.1,1358.0L1290.3,1358.9L1304.6,1364.1L1307.6,1368.9L1299.7,1372.4L1291.4,1372.0L1283.9,1372.8L1284.3,1379.4L1292.2,1382.0L1292.9,1379.4L1302.0,1378.9L1305.0,1377.6L1302.7,1374.6L1311.4,1370.2L1318.2,1372.0L1320.5,1368.9L1317.4,1366.3L1319.3,1363.7L1316.7,1361.1L1327.3,1362.4L1329.1,1365.0L1324.6,1365.4L1327.3,1369.4L1333.3,1368.5L1334.0,1365.9L1355.1,1359.8L1358.2,1362.0L1372.9,1359.8L1378.5,1362.4L1383.0,1356.7L1378.9,1353.7L1404.9,1357.2L1406.4,1363.3L1410.9,1363.3L1413.6,1361.1L1404.9,1357.2L1405.3,1350.7L1410.9,1346.7L1413.6,1342.0L1422.3,1342.8L1427.2,1345.4L1426.0,1348.9L1423.4,1348.9L1426.4,1353.3L1426.4,1359.3L1430.5,1362.0L1428.7,1365.0L1421.5,1371.1L1425.6,1371.5L1431.7,1366.7L1435.5,1360.2L1430.9,1358.9L1433.2,1352.4L1428.3,1348.9L1435.1,1345.9L1434.3,1342.8L1436.2,1342.4L1438.1,1345.0L1436.6,1349.3L1444.9,1345.0L1453.2,1345.0L1460.0,1347.2L1456.6,1343.7L1456.2,1339.3L1463.3,1338.0L1472.0,1338.5L1479.9,1338.0L1476.9,1335.4L1481.4,1332.8L1485.6,1332.8L1493.1,1330.6L1502.9,1329.8L1504.1,1328.9L1514.2,1328.5L1517.3,1329.3L1525.6,1327.2L1532.7,1327.2L1533.8,1325.0L1546.3,1321.5L1552.7,1322.8L1547.4,1324.1L1555.7,1324.5L1556.8,1326.7L1571.5,1325.9L1579.8,1328.0L1582.9,1329.8L1582.1,1331.9L1578.0,1333.2L1568.2,1335.4L1565.1,1336.7L1569.7,1337.6L1575.3,1338.5L1578.7,1337.6L1580.6,1340.6L1588.5,1338.5L1600.6,1339.3L1601.3,1341.5L1617.2,1342.4L1617.5,1338.9L1627.7,1339.3L1637.5,1342.0L1639.4,1344.6L1637.1,1346.3L1641.7,1349.8L1647.7,1351.5L1651.5,1347.2L1657.5,1348.9L1663.9,1347.6L1671.1,1349.3L1673.7,1348.0L1680.1,1348.5L1677.1,1344.6L1682.4,1342.8L1716.3,1345.4L1719.7,1348.0L1729.1,1351.5L1744.6,1350.7L1752.1,1351.1L1755.1,1352.8L1754.8,1356.3L1759.3,1357.6L1764.6,1356.7L1771.0,1356.3L1778.1,1357.2L1785.3,1356.7L1792.1,1360.7L1796.6,1359.3L1793.6,1356.3L1795.5,1354.6L1807.2,1355.9L1815.1,1355.4L1826.0,1357.6L1831.3,1359.5L1831.3,1374.6L1826.4,1378.9L1821.5,1378.5L1824.9,1380.7L1827.2,1384.1L1828.3,1388.5L1821.5,1387.6L1810.9,1390.7L1807.5,1391.1L1801.9,1394.2L1796.2,1397.2L1794.7,1398.9L1789.5,1395.9L1779.7,1399.4L1777.8,1397.6L1774.4,1399.8L1769.1,1398.9L1768.0,1402.0L1763.4,1406.3L1763.8,1408.1L1768.0,1408.9L1767.6,1415.0L1763.8,1415.5L1762.3,1418.9L1763.8,1420.7L1757.4,1423.3L1755.9,1428.1L1750.2,1429.0L1749.1,1433.7L1743.8,1437.7L1742.3,1434.6L1740.4,1412.4L1743.8,1409.8L1749.9,1406.8L1756.7,1401.5L1763.1,1397.2L1753.3,1390.7L1744.6,1390.7L1734.0,1399.4L1737.1,1402.4L1728.8,1403.3L1723.1,1403.7L1723.1,1400.7L1717.4,1399.8L1712.5,1402.0L1701.2,1401.5L1688.8,1402.8L1676.4,1411.1L1662.0,1421.6L1668.1,1422.0L1669.9,1425.0L1673.7,1425.5L1676.0,1423.3L1680.1,1423.7L1685.4,1428.5L1685.8,1432.4L1682.8,1436.8L1682.4,1442.0L1680.9,1449.0L1675.2,1455.0L1673.7,1458.1L1661.3,1470.7L1656.0,1473.3L1653.7,1473.3L1646.9,1472.9L1645.1,1475.1L1645.8,1475.9L1641.7,1478.5L1641.7,1481.6L1636.4,1485.5L1633.4,1486.4L1633.0,1488.5L1636.4,1491.6L1639.8,1496.8L1640.9,1499.4L1640.9,1504.6L1639.4,1506.8L1633.0,1509.4L1629.6,1509.9L1629.2,1499.9L1630.4,1495.1L1626.6,1494.2L1624.3,1490.7L1625.5,1487.7L1621.3,1485.9L1611.1,1488.1L1609.2,1490.3L1611.1,1481.6L1608.1,1482.9L1603.6,1485.9L1601.0,1489.4L1595.7,1491.2L1597.9,1493.8L1601.0,1494.6L1604.0,1497.7L1608.1,1494.6L1611.5,1496.4L1614.5,1496.8L1614.5,1499.0L1609.2,1499.9L1607.4,1502.5L1602.1,1507.2L1605.9,1509.9L1607.4,1514.2L1609.6,1518.1L1612.3,1521.6L1612.3,1525.1L1610.0,1526.0L1610.8,1528.6L1613.0,1529.9L1611.1,1536.8L1609.2,1537.3L1603.6,1547.7L1600.2,1552.9L1589.6,1560.3L1585.5,1560.8L1583.2,1562.9L1581.7,1561.6L1579.5,1563.4L1574.2,1565.5L1570.4,1566.4L1568.9,1571.2L1567.0,1571.2L1565.9,1568.2L1567.0,1566.4L1561.7,1565.1L1555.0,1569.5L1551.9,1573.4L1551.2,1576.4L1553.8,1581.2L1557.6,1586.9L1561.0,1589.5L1563.3,1592.9L1564.8,1601.2L1564.4,1608.6L1561.4,1611.7L1556.8,1614.3L1553.8,1618.2L1549.3,1622.1L1547.8,1619.5L1548.9,1616.4L1545.9,1613.8L1542.9,1613.4L1541.4,1610.8L1539.5,1606.4L1538.4,1601.2L1533.5,1604.3L1532.7,1604.7L1530.1,1601.2L1529.7,1606.0L1526.7,1619.5L1529.3,1619.5L1530.8,1623.4L1531.6,1627.3L1535.7,1630.4L1537.6,1632.5L1541.0,1635.6L1542.5,1638.2L1542.1,1643.4L1542.9,1647.3L1544.4,1648.6L1545.5,1653.8L1542.9,1654.3L1539.5,1650.8L1535.0,1647.3L1534.6,1645.1L1532.3,1642.5L1532.0,1638.6L1530.5,1636.4L1530.8,1633.4L1530.1,1631.2L1528.6,1629.9L1527.8,1627.7L1524.0,1623.0L1523.3,1625.6L1522.9,1623.0L1524.4,1616.0L1524.0,1613.0L1525.2,1609.9L1523.7,1607.3L1524.0,1602.5L1522.5,1600.3L1521.4,1595.1L1520.7,1589.5L1519.1,1586.0L1516.5,1588.2L1512.4,1591.2L1510.1,1589.9L1507.8,1589.9L1509.0,1584.2L1508.2,1580.3L1505.2,1575.1L1505.9,1573.8L1503.7,1572.9L1501.0,1569.5L1499.9,1567.3L1499.5,1565.1L1498.8,1562.9L1497.3,1560.3L1493.9,1560.3L1494.3,1562.1L1493.1,1564.7L1491.2,1563.8L1490.9,1564.2L1489.7,1563.9L1488.2,1563.4L1487.9,1565.1L1485.2,1565.1L1480.6,1566.0L1480.7,1569.5L1478.8,1571.6L1473.5,1574.7L1469.0,1579.9L1466.4,1582.5L1462.6,1585.5L1462.6,1587.3L1460.7,1588.6L1457.3,1590.1L1455.4,1590.3L1454.3,1593.8L1455.1,1599.5L1455.4,1603.0L1453.9,1606.9L1453.9,1614.3L1451.7,1614.7L1450.2,1618.2L1451.3,1619.5L1447.9,1620.8L1446.4,1623.4L1444.9,1624.7L1441.5,1620.8L1439.6,1614.7L1438.1,1610.3L1437.0,1608.2L1435.1,1604.3L1433.9,1598.6L1433.2,1596.0L1429.8,1589.9L1428.3,1581.6L1427.2,1576.0L1427.2,1570.8L1426.4,1566.4L1421.1,1569.0L1418.5,1568.6L1413.6,1563.4L1415.1,1561.6L1414.0,1560.3L1409.8,1556.4L1406.8,1555.5L1405.7,1552.1L1403.0,1549.0L1395.9,1549.9L1384.6,1550.3L1369.1,1547.7L1367.5,1542.2L1365.7,1541.6L1362.7,1542.2L1358.9,1544.2L1354.4,1542.9L1350.6,1539.4L1346.9,1538.1L1344.6,1534.2L1341.6,1528.6L1339.7,1529.0L1337.1,1527.7L1335.9,1529.4L1333.5,1529.1L1334.4,1533.5L1335.9,1537.7L1338.6,1539.9L1339.3,1541.6L1342.0,1543.4L1341.6,1546.8L1342.0,1548.1L1343.1,1550.8L1344.2,1551.6L1346.5,1546.0L1347.2,1549.9L1346.5,1552.5L1351.0,1554.2L1356.3,1554.7L1360.0,1550.8L1365.3,1544.7L1365.7,1551.2L1369.1,1555.5L1374.0,1556.8L1378.1,1562.5L1376.3,1566.4L1373.2,1570.8L1371.4,1570.3L1370.2,1573.8L1366.8,1578.6L1361.2,1582.9L1359.3,1585.5L1352.9,1586.9L1349.5,1590.3L1339.7,1595.6L1336.3,1598.6L1333.7,1598.6L1333.3,1600.3L1325.7,1601.6L1323.9,1603.0L1322.0,1604.3L1316.7,1604.7L1315.6,1602.1L1314.4,1595.1L1313.3,1593.4L1314.1,1590.3L1314.1,1588.6L1313.3,1586.4L1312.2,1585.1L1310.3,1582.1L1308.0,1578.2L1305.0,1572.5L1300.1,1566.8L1299.7,1561.2L1297.8,1556.4L1296.0,1554.7L1294.1,1553.8L1292.9,1551.2L1292.9,1550.3L1290.7,1547.3L1289.2,1543.8L1286.9,1540.3L1285.0,1537.3L1284.3,1531.2L1281.6,1523.3L1283.1,1522.0L1284.7,1516.8L1286.5,1512.0L1288.0,1505.5L1288.8,1503.8L1287.7,1499.9L1283.5,1499.4L1280.9,1502.0L1275.2,1502.5L1272.2,1500.3L1268.1,1499.9L1267.3,1501.6L1264.7,1502.5L1260.9,1499.9L1256.8,1499.9L1254.5,1495.5L1251.9,1493.3L1253.7,1489.8L1251.5,1487.7L1255.6,1483.8L1261.3,1483.3L1262.0,1481.2L1258.3,1481.2L1256.8,1481.2L1252.2,1484.6L1250.7,1482.0L1248.5,1481.2L1242.0,1482.5L1244.7,1485.1L1242.8,1485.7L1239.4,1484.2L1238.7,1485.5L1237.9,1484.2L1237.5,1485.5L1240.5,1489.0L1240.2,1489.8L1242.8,1493.3L1243.2,1495.5L1239.8,1494.6L1240.9,1496.8L1238.7,1497.2L1240.2,1501.2L1237.5,1501.2L1234.5,1499.4L1233.0,1495.9L1232.2,1492.9L1230.7,1490.7L1228.9,1488.5L1228.9,1487.2L1228.0,1486.8L1225.8,1484.2L1225.5,1482.5L1225.8,1479.4L1226.2,1478.1L1225.8,1477.2L1222.1,1474.6L1218.7,1473.3L1216.4,1471.6L1213.0,1470.3L1210.0,1467.2L1210.8,1466.8L1208.9,1463.3L1206.6,1462.9L1205.3,1464.6L1204.3,1463.3L1204.3,1461.6L1205.1,1461.1L1200.2,1462.4L1199.1,1465.5L1200.2,1467.7L1203.6,1469.8L1205.5,1473.3L1209.6,1477.0L1212.6,1477.0L1213.8,1478.1L1212.6,1479.0L1216.0,1480.3L1218.7,1481.6L1222.1,1483.8L1222.4,1484.6L1221.7,1486.4L1219.4,1484.2L1216.4,1483.8L1214.5,1486.4L1217.5,1488.1L1217.2,1490.3L1215.3,1490.7L1213.4,1494.2L1211.9,1493.3L1212.6,1490.7L1213.4,1489.8L1210.8,1485.5L1209.2,1484.6L1208.1,1482.9L1205.9,1482.0L1204.0,1480.3L1201.3,1479.8L1198.3,1478.1L1194.9,1475.1L1192.3,1472.9L1191.2,1468.5L1189.3,1468.1L1186.3,1466.4L1184.4,1467.2L1182.5,1469.0L1180.6,1469.4L1177.2,1472.0L1170.0,1470.7L1164.4,1472.0L1164.0,1474.6L1164.0,1477.2L1160.6,1480.3L1155.7,1481.2L1155.3,1482.5L1153.1,1485.1L1151.6,1488.5L1152.7,1490.3L1150.8,1492.9L1150.1,1495.9L1147.4,1496.8L1144.8,1499.9L1136.1,1499.9L1133.9,1501.6L1132.3,1503.3L1130.5,1501.6L1129.3,1501.2L1128.2,1499.0L1124.4,1498.1L1122.9,1499.4L1121.0,1498.5L1119.1,1498.5Z" fill="#B2A9E2" stroke="none"/>
<path d="M1131.2,1441.6L1135.7,1440.7L1139.9,1439.4L1147.0,1439.4L1157.6,1437.7L1158.0,1435.9L1155.0,1435.5L1159.1,1430.3L1154.6,1429.4L1152.7,1426.8L1151.2,1423.3L1148.2,1422.0L1145.2,1416.3L1143.3,1414.6L1145.9,1408.9L1141.4,1408.5L1137.2,1408.9L1141.0,1404.6L1133.9,1404.6L1131.6,1408.5L1130.8,1412.4L1129.3,1413.3L1131.6,1418.9L1135.0,1421.1L1139.1,1422.0L1141.4,1424.6L1141.0,1427.2L1136.5,1427.6L1134.6,1429.8L1136.5,1432.0L1133.1,1434.6L1139.1,1435.9L1135.4,1436.8Z" fill="#B2A9E2" stroke="none"/>
<path d="M1129.3,1425.0L1130.1,1432.4L1124.0,1433.7L1115.0,1434.2L1116.1,1429.4L1115.4,1425.0L1124.0,1419.8L1127.4,1419.4L1131.2,1422.0Z" fill="#B2A9E2" stroke="none"/>
<path d="M1185.9,1481.6L1189.3,1482.5L1189.3,1489.0L1186.6,1489.8L1184.4,1489.0L1183.6,1481.6Z" fill="#B2A9E2" stroke="none"/>
<path d="M1188.9,1475.9L1187.8,1472.5L1185.5,1474.2L1184.7,1477.2L1187.4,1479.4Z" fill="#B2A9E2" stroke="none"/>
<path d="M1211.1,1493.3L1204.3,1494.2L1199.4,1495.1L1200.2,1495.9L1209.6,1500.3L1210.4,1498.1Z" fill="#B2A9E2" stroke="none"/>
<path d="M1242.0,1504.2L1243.9,1505.5L1251.5,1507.2L1250.0,1505.5L1241.3,1505.9Z" fill="#B2A9E2" stroke="none"/>
<path d="M1274.5,1506.8L1283.1,1504.2L1280.5,1506.4L1280.9,1508.6L1276.7,1508.6Z" fill="#B2A9E2" stroke="none"/>
<path d="M1194.9,1318.5L1201.7,1325.0L1216.0,1325.9L1222.4,1321.1L1236.8,1318.0L1256.0,1314.5L1250.0,1309.8L1226.2,1309.8L1209.2,1312.8L1193.4,1313.2Z" fill="#B2A9E2" stroke="none"/>
<path d="M1348.7,1348.5L1359.7,1352.0L1369.5,1352.0L1363.1,1345.0L1362.3,1340.6L1373.2,1331.9L1384.9,1328.9L1399.6,1327.2L1409.8,1324.5L1396.2,1327.2L1369.5,1331.5L1357.8,1339.3L1353.6,1342.8Z" fill="#B2A9E2" stroke="none"/>
<path d="M1499.5,1312.4L1521.4,1313.2L1530.5,1312.4L1546.7,1319.3L1550.4,1317.2L1527.8,1307.2L1510.8,1306.3L1495.8,1310.2Z" fill="#B2A9E2" stroke="none"/>
<path d="M1665.4,1332.4L1682.4,1334.1L1703.1,1331.9L1720.8,1332.8L1706.9,1335.9L1688.0,1338.5L1673.0,1336.7Z" fill="#B2A9E2" stroke="none"/>
<path d="M1827.2,1351.1L1831.3,1350.2L1831.3,1348.0L1826.4,1348.9Z" fill="#B2A9E2" stroke="none"/>
<path d="M1326.1,1309.3L1341.2,1307.6L1371.4,1307.6L1394.0,1306.7L1386.4,1310.6L1356.3,1311.9L1333.7,1311.5Z" fill="#B2A9E2" stroke="none"/>
<path d="M1646.2,1510.7L1651.1,1505.5L1657.1,1505.1L1664.3,1505.1L1668.1,1497.2L1670.7,1499.4L1676.4,1495.1L1680.1,1486.8L1680.5,1482.0L1685.8,1479.4L1687.7,1489.0L1683.9,1495.5L1684.3,1505.9L1679.7,1507.2L1676.7,1508.6L1669.9,1509.0L1668.8,1512.5L1662.0,1512.5L1656.4,1509.9L1648.8,1512.0Z" fill="#B2A9E2" stroke="none"/>
<path d="M1685.8,1479.4L1680.1,1478.5L1681.6,1471.1L1686.5,1461.6L1692.2,1465.9L1700.9,1466.8L1696.0,1472.5L1692.6,1476.8L1686.5,1473.8Z" fill="#B2A9E2" stroke="none"/>
<path d="M1642.0,1514.6L1643.6,1512.0L1647.3,1513.3L1650.3,1515.5L1647.7,1522.9L1644.7,1524.2L1642.4,1518.6Z" fill="#B2A9E2" stroke="none"/>
<path d="M1652.6,1514.6L1659.8,1510.7L1660.9,1512.5L1658.6,1515.1L1654.5,1516.8Z" fill="#B2A9E2" stroke="none"/>
<path d="M1688.0,1459.0L1693.7,1457.2L1692.6,1445.0L1697.5,1446.3L1692.9,1434.2L1693.7,1427.2L1690.3,1423.3L1688.8,1435.5L1686.9,1447.7Z" fill="#B2A9E2" stroke="none"/>
<path d="M1605.5,1559.5L1608.9,1550.8L1612.3,1551.2L1609.6,1560.3L1607.7,1563.9Z" fill="#B2A9E2" stroke="none"/>
<path d="M1562.1,1575.1L1565.1,1572.1L1570.4,1572.1L1571.2,1573.8L1569.7,1577.7L1565.5,1580.3Z" fill="#B2A9E2" stroke="none"/>
<path d="M1453.2,1630.8L1454.7,1616.9L1458.8,1622.1L1461.5,1626.9L1460.3,1631.2L1456.2,1633.6Z" fill="#B2A9E2" stroke="none"/>
<path d="M1606.2,1579.0L1613.8,1580.3L1613.4,1585.1L1611.5,1590.3L1620.2,1598.6L1614.5,1600.8L1609.2,1600.3L1607.4,1596.9L1605.1,1594.7L1604.7,1588.2Z" fill="#B2A9E2" stroke="none"/>
<path d="M1613.0,1629.0L1615.7,1626.9L1618.7,1624.7L1625.1,1616.9L1629.2,1623.8L1629.6,1628.2L1625.8,1635.1L1623.6,1633.8L1620.9,1632.5L1619.8,1629.5Z" fill="#B2A9E2" stroke="none"/>
<path d="M1614.1,1612.1L1618.3,1612.1L1616.8,1619.5L1613.4,1616.4Z" fill="#B2A9E2" stroke="none"/>
<path d="M1621.3,1609.5L1625.8,1606.4L1627.0,1611.7L1624.0,1614.7Z" fill="#B2A9E2" stroke="none"/>
<path d="M1594.5,1623.0L1603.2,1613.8L1604.0,1609.9L1599.4,1619.0Z" fill="#B2A9E2" stroke="none"/>
<path d="M1512.0,1635.6L1520.3,1636.9L1523.7,1640.8L1528.6,1645.6L1532.0,1650.4L1536.1,1650.4L1541.4,1656.9L1544.0,1659.1L1542.5,1662.5L1546.3,1664.3L1548.2,1669.5L1552.7,1673.0L1551.9,1678.2L1551.6,1685.2L1547.4,1685.2L1539.5,1677.8L1535.0,1671.7L1530.1,1662.5L1526.3,1658.6L1524.4,1651.7L1521.0,1648.6L1516.1,1642.5L1512.4,1637.8Z" fill="#B2A9E2" stroke="none"/>
<path d="M1549.3,1689.5L1552.7,1685.6L1557.2,1685.4L1561.7,1687.3L1569.3,1689.5L1577.2,1689.5L1584.4,1693.4L1584.4,1697.8L1577.2,1696.0L1569.7,1694.7L1561.0,1693.0L1554.2,1691.7Z" fill="#B2A9E2" stroke="none"/>
<path d="M1564.0,1651.7L1566.3,1650.8L1571.9,1651.2L1574.2,1646.9L1581.3,1642.5L1588.1,1636.0L1592.7,1629.5L1596.4,1631.7L1602.1,1636.0L1599.1,1638.2L1597.2,1641.7L1597.2,1651.7L1601.3,1655.6L1596.8,1656.0L1595.7,1663.0L1592.3,1666.0L1590.4,1676.9L1584.4,1674.7L1579.8,1673.0L1568.2,1672.1L1567.8,1666.5L1564.0,1661.7Z" fill="#B2A9E2" stroke="none"/>
<path d="M1603.2,1683.4L1602.8,1674.7L1601.7,1670.8L1605.5,1656.9L1608.5,1653.8L1620.6,1655.6L1624.3,1652.5L1621.7,1657.8L1610.8,1657.3L1617.5,1662.1L1610.8,1663.8L1614.5,1673.4L1617.2,1679.9L1611.5,1680.8L1608.9,1670.8L1607.0,1683.4Z" fill="#B2A9E2" stroke="none"/>
<path d="M1634.9,1651.2L1637.9,1654.7L1637.1,1658.2L1635.6,1663.4L1633.0,1655.2Z" fill="#B2A9E2" stroke="none"/>
<path d="M1631.1,1676.0L1627.3,1673.9L1628.5,1673.0Z" fill="#B2A9E2" stroke="none"/>
<path d="M1636.0,1674.7L1644.7,1674.7L1639.4,1672.1Z" fill="#B2A9E2" stroke="none"/>
<path d="M1590.4,1696.5L1597.6,1696.0L1601.7,1697.3L1593.8,1698.7Z" fill="#B2A9E2" stroke="none"/>
<path d="M1604.7,1696.9L1616.0,1695.2L1615.7,1697.3L1605.1,1698.2Z" fill="#B2A9E2" stroke="none"/>
<path d="M1621.7,1695.6L1632.6,1696.0L1624.0,1700.8L1618.7,1704.7Z" fill="#B2A9E2" stroke="none"/>
<path d="M1646.6,1665.6L1651.8,1661.2L1658.6,1663.0L1659.8,1669.5L1663.5,1674.3L1670.7,1666.9L1676.7,1669.5L1684.3,1670.8L1697.8,1676.5L1702.7,1683.4L1709.2,1686.0L1707.6,1691.7L1711.0,1694.3L1715.6,1699.1L1721.2,1704.3L1717.1,1704.7L1710.3,1703.4L1705.4,1698.7L1698.2,1692.6L1692.9,1695.2L1693.3,1698.7L1690.3,1700.0L1684.3,1699.1L1677.1,1694.7L1673.3,1696.0L1671.5,1696.0L1675.6,1691.3L1674.5,1686.5L1672.6,1683.0L1662.4,1679.1L1656.7,1674.7L1654.1,1677.3L1650.3,1671.7L1654.5,1670.4L1649.6,1666.5Z" fill="#B2A9E2" stroke="none"/>
<path d="M1719.0,1683.4L1725.4,1677.8L1726.9,1683.9L1721.6,1686.0Z" fill="#B2A9E2" stroke="none"/>
<path d="M1580.2,1755.2L1581.7,1763.5L1582.1,1774.8L1584.7,1783.5L1586.6,1793.9L1588.9,1801.3L1586.6,1806.5L1588.5,1809.1L1597.2,1812.2L1604.7,1807.0L1613.4,1807.4L1619.0,1807.0L1624.3,1801.7L1628.1,1799.6L1638.7,1797.4L1647.7,1796.5L1655.2,1799.6L1659.0,1801.3L1662.4,1809.1L1663.9,1810.4L1666.9,1807.8L1671.1,1803.9L1673.7,1807.4L1672.6,1811.8L1674.8,1813.9L1679.0,1816.5L1680.5,1821.3L1682.8,1824.8L1686.9,1826.1L1693.7,1828.3L1699.0,1824.4L1704.3,1829.2L1708.4,1825.7L1715.9,1823.9L1718.2,1822.2L1718.6,1817.4L1721.6,1811.8L1724.2,1807.4L1727.6,1800.4L1730.3,1793.9L1731.8,1781.7L1730.3,1773.0L1729.1,1769.6L1724.2,1764.3L1721.2,1757.8L1717.1,1756.5L1713.7,1748.2L1706.5,1744.3L1703.5,1739.1L1700.9,1730.4L1700.5,1724.3L1696.0,1721.7L1694.1,1719.5L1694.1,1715.6L1690.7,1707.3L1688.4,1708.7L1686.5,1715.6L1686.9,1725.2L1684.6,1730.8L1681.3,1736.5L1676.4,1732.6L1671.8,1729.1L1667.3,1727.4L1664.3,1723.9L1665.0,1717.4L1667.3,1712.6L1668.8,1713.4L1665.0,1711.5L1660.1,1711.7L1652.6,1710.0L1649.6,1708.7L1646.2,1712.6L1645.1,1713.9L1640.5,1722.1L1636.8,1724.6L1634.5,1721.7L1628.1,1721.7L1624.7,1723.4L1621.7,1727.4L1618.3,1731.7L1613.4,1738.7L1610.0,1744.8L1600.6,1747.8L1595.3,1749.5L1592.7,1749.1L1588.1,1753.0L1585.5,1754.3Z" fill="#B2A9E2" stroke="none"/>
<path d="M1699.3,1837.0L1704.6,1838.3L1711.8,1837.4L1711.8,1842.6L1710.3,1847.4L1706.5,1849.2L1700.9,1845.2L1698.2,1838.7Z" fill="#B2A9E2" stroke="none"/>
<path d="M1803.4,1809.6L1808.3,1812.6L1810.9,1817.0L1813.6,1821.3L1819.2,1824.4L1825.6,1823.5L1821.9,1830.0L1819.6,1830.9L1813.2,1840.9L1810.9,1839.2L1812.8,1835.2L1808.3,1831.3L1810.9,1828.3L1811.3,1822.2L1804.9,1813.1Z" fill="#B2A9E2" stroke="none"/>
<path d="M1804.2,1835.7L1809.4,1839.2L1808.3,1843.1L1803.8,1848.3L1798.9,1851.8L1795.9,1859.2L1791.0,1862.2L1781.2,1860.5L1780.8,1859.2L1787.2,1851.3L1795.5,1846.5L1797.7,1843.5L1801.5,1837.4Z" fill="#B2A9E2" stroke="none"/>
<path d="M1446.0,1505.1L1450.2,1510.3L1449.8,1513.8L1451.3,1516.0L1451.3,1518.1L1448.6,1517.7L1449.4,1522.5L1453.2,1525.1L1458.4,1528.1L1456.2,1530.3L1454.7,1534.2L1458.4,1536.0L1461.8,1538.1L1466.7,1540.3L1472.0,1541.2L1474.3,1543.4L1477.7,1543.8L1481.4,1544.7L1484.8,1544.7L1485.2,1542.9L1484.8,1540.3L1487.1,1537.3L1487.5,1540.7L1490.9,1543.4L1499.5,1542.9L1499.9,1539.9L1498.4,1538.6L1501.4,1538.1L1504.8,1535.1L1509.3,1532.0L1512.4,1533.3L1515.0,1531.2L1516.9,1534.2L1515.4,1536.0L1519.5,1536.4L1519.9,1538.1L1518.4,1539.0L1518.8,1541.6L1516.1,1540.7L1511.2,1543.8L1511.6,1546.4L1509.3,1549.9L1509.3,1552.1L1507.5,1555.5L1504.4,1554.7L1503.7,1560.8L1502.2,1563.8L1499.9,1556.8L1499.2,1556.8L1498.4,1559.5L1496.5,1557.3L1497.7,1554.7L1499.2,1554.7L1501.0,1550.8L1495.8,1549.9L1492.0,1549.4L1491.6,1547.3L1489.7,1546.4L1486.7,1544.7L1485.2,1547.3L1487.9,1549.9L1485.6,1551.2L1484.8,1552.9L1487.1,1554.2L1486.3,1556.8L1488.2,1559.9L1488.2,1563.4L1487.9,1565.1L1485.2,1565.1L1480.6,1566.0L1480.7,1569.5L1478.8,1571.6L1473.5,1574.7L1469.0,1579.9L1466.4,1582.5L1462.6,1585.5L1462.6,1587.3L1460.7,1588.6L1457.3,1590.1L1455.4,1590.3L1454.3,1593.8L1455.1,1599.5L1455.4,1603.0L1453.9,1606.9L1453.9,1614.3L1451.7,1614.7L1450.2,1618.2L1451.3,1619.5L1447.9,1620.8L1446.4,1623.4L1444.9,1624.7L1441.5,1620.8L1439.6,1614.7L1438.1,1610.3L1437.0,1608.2L1435.1,1604.3L1433.9,1598.6L1433.2,1596.0L1429.8,1589.9L1428.3,1581.6L1427.2,1576.0L1427.2,1570.8L1426.4,1566.4L1421.1,1569.0L1418.5,1568.6L1413.6,1563.4L1415.1,1561.6L1414.0,1560.3L1409.8,1556.4L1412.1,1553.4L1420.4,1553.4L1419.6,1549.9L1417.7,1546.4L1414.7,1542.5L1418.9,1537.7L1423.4,1538.1L1427.2,1533.5L1429.8,1529.1L1433.2,1524.7L1433.2,1521.6L1436.6,1519.0L1433.6,1516.8L1432.1,1514.2L1430.5,1510.3L1432.4,1508.6L1438.5,1509.4L1442.6,1508.6Z" fill="#A59BDB"/>
<path d="M1188.5,1528.1L1190.4,1549.4L1197.6,1557.3L1205.5,1559.9L1210.4,1559.5L1226.6,1566.0L1243.2,1574.7L1243.2,1572.5L1247.0,1572.5L1247.0,1563.8L1247.0,1521.2L1240.2,1519.0L1231.9,1516.8L1228.5,1520.7L1227.3,1525.5L1222.4,1527.3L1214.9,1523.8L1210.4,1519.4L1199.8,1516.8L1196.1,1515.5L1190.4,1526.8Z" fill="#DBD6E1"/>
<path d="M1106.7,1596.0L1109.3,1605.6L1121.4,1609.9L1123.3,1615.1L1132.0,1614.3L1136.5,1617.7L1142.5,1618.2L1141.4,1612.5L1133.1,1610.3L1133.1,1606.0L1138.0,1600.8L1145.2,1594.7L1154.2,1594.7L1161.0,1592.9L1168.5,1586.4L1168.5,1576.0L1159.5,1569.9L1147.0,1560.3L1134.2,1550.8L1128.2,1550.8L1132.0,1588.6L1109.0,1592.5Z" fill="#DBD6E1"/>
<path d="M1095.8,1611.7L1101.1,1618.2L1102.9,1623.0L1109.7,1629.9L1117.6,1635.6L1124.4,1640.4L1137.6,1636.9L1142.1,1637.3L1140.6,1629.9L1142.9,1623.8L1142.5,1618.2L1136.5,1617.7L1132.0,1614.3L1123.3,1615.1L1121.4,1609.9L1109.3,1605.6L1101.1,1604.7L1095.8,1607.3Z" fill="#DBD6E1"/>
<path d="M1088.2,1568.2L1103.7,1566.8L1103.7,1559.5L1107.5,1557.3L1107.5,1546.4L1119.9,1546.4L1119.9,1539.0L1103.3,1539.4L1098.4,1545.1L1096.2,1552.9L1091.2,1558.1Z" fill="#DBD6E1"/>
<path d="M1207.0,1632.5L1211.1,1626.9L1222.4,1620.8L1231.9,1618.2L1237.5,1611.7L1242.4,1621.7L1247.0,1615.1L1255.2,1617.7L1264.7,1616.9L1274.1,1607.3L1276.0,1606.4L1280.9,1618.2L1281.3,1622.1L1277.1,1625.6L1285.8,1635.6L1282.4,1639.5L1278.6,1643.0L1270.3,1643.0L1268.8,1644.3L1265.0,1655.2L1264.3,1665.2L1262.0,1671.7L1263.5,1685.2L1268.8,1695.6L1261.7,1696.5L1259.8,1699.5L1260.1,1707.3L1265.0,1712.6L1255.2,1710.0L1250.0,1706.9L1243.6,1707.3L1236.8,1706.9L1235.3,1700.0L1229.2,1690.0L1218.7,1694.7L1214.2,1685.6L1199.1,1686.0L1198.7,1681.2L1194.5,1676.5L1188.9,1670.4L1185.9,1664.3L1188.5,1655.2L1195.3,1655.2L1195.3,1649.9L1202.1,1649.5L1207.4,1650.4L1212.6,1652.1L1213.4,1646.9L1208.9,1639.5Z" fill="#DBD6E1"/>
<path d="M1289.9,1596.9L1295.6,1594.7L1297.8,1581.6L1300.9,1590.3L1308.0,1596.4L1312.9,1602.1L1309.2,1603.4L1304.6,1597.3L1296.0,1596.4L1290.3,1597.3Z" fill="#DBD6E1"/>
<path d="M1315.9,1607.7L1320.8,1614.3L1328.4,1612.5L1336.7,1610.3L1337.1,1618.2L1333.7,1624.7L1329.5,1624.7L1318.6,1620.3L1314.8,1617.7L1314.1,1611.7Z" fill="#DBD6E1"/>
<path d="M1319.0,1488.1L1321.6,1492.0L1319.7,1497.7L1323.9,1503.0L1326.5,1506.8L1323.9,1511.7L1326.5,1516.0L1331.0,1518.1L1332.9,1521.6L1333.7,1524.7L1335.9,1529.4L1339.7,1529.0L1341.6,1528.6L1344.6,1534.2L1346.9,1538.1L1350.6,1539.4L1354.4,1542.9L1358.9,1544.2L1362.7,1542.2L1365.7,1541.6L1367.5,1542.2L1369.1,1547.7L1384.6,1550.3L1386.1,1545.5L1391.3,1542.9L1391.0,1541.2L1389.5,1540.3L1388.3,1536.0L1384.2,1532.0L1382.3,1529.9L1385.3,1522.9L1382.3,1522.5L1380.8,1512.9L1382.7,1509.9L1383.4,1504.2L1380.8,1499.9L1375.9,1496.8L1368.7,1494.2L1361.9,1494.2L1356.3,1497.2L1355.9,1497.7L1346.9,1499.4L1341.6,1496.8L1337.4,1492.5L1335.9,1492.9L1332.5,1487.7L1328.0,1490.7L1321.6,1486.8Z" fill="#DBD6E1"/>
<path d="M1287.3,1504.6L1288.8,1503.8L1289.9,1500.3L1292.6,1500.3L1301.6,1499.9L1306.1,1498.1L1312.2,1497.7L1308.8,1500.7L1308.4,1504.6L1307.6,1509.9L1299.0,1514.2L1290.7,1519.0L1287.3,1517.3L1288.0,1513.8L1290.7,1510.7L1288.4,1509.0Z" fill="#DBD6E1"/>
<path d="M1645.1,1475.1L1645.8,1475.9L1641.7,1478.5L1641.7,1481.6L1636.4,1485.5L1633.4,1486.4L1633.0,1488.5L1636.4,1491.6L1639.8,1496.8L1640.9,1499.4L1640.9,1504.6L1639.4,1506.8L1633.0,1509.4L1629.6,1509.9L1629.2,1499.9L1630.4,1495.1L1626.6,1494.2L1624.3,1490.7L1625.5,1487.7L1621.3,1485.9L1627.3,1481.6L1633.4,1479.0L1636.0,1476.8L1641.3,1475.1Z" fill="#DBD6E1"/>
<path d="M1557.6,1597.7L1554.2,1596.0L1550.8,1591.6L1547.4,1588.2L1547.4,1583.8L1541.8,1579.9L1533.8,1583.4L1533.5,1574.7L1534.6,1567.3L1538.0,1562.1L1540.3,1565.1L1541.8,1569.0L1546.3,1569.0L1547.8,1572.9L1545.5,1574.2L1548.9,1578.2L1554.6,1585.1L1558.4,1592.1Z" fill="#DBD6E1"/>
<path d="M1209.2,1437.2L1214.9,1439.8L1224.0,1444.2L1216.8,1448.1L1208.5,1447.2L1201.7,1442.9L1199.4,1440.7L1206.6,1437.7Z" fill="#DBD6E1"/>
<path d="M1224.3,1464.2L1226.6,1468.1L1222.8,1474.2L1218.7,1472.0L1213.0,1464.2L1216.8,1462.9Z" fill="#DBD6E1"/>
<path d="M565.0,1571.6L568.4,1573.8L565.7,1577.1L564.6,1574.2Z" fill="#6C5FC7" stroke="none"/>
<path d="M561.9,1568.6L564.6,1569.0L562.7,1569.9Z" fill="#6C5FC7" stroke="none"/>
<path d="M556.3,1565.5L558.2,1566.8L556.7,1566.8Z" fill="#6C5FC7" stroke="none"/>
<path d="M550.3,1562.9L552.1,1563.4L551.0,1564.2Z" fill="#6C5FC7" stroke="none"/>
<path d="M1329.1,1465.9L1331.8,1461.1L1337.8,1457.7L1345.7,1455.0L1352.5,1455.9L1353.3,1462.4L1346.1,1465.9L1342.3,1466.8L1344.6,1468.1L1350.6,1476.8L1352.1,1477.2L1356.3,1482.0L1352.1,1481.6L1355.9,1487.7L1352.9,1488.5L1355.9,1497.7L1346.9,1499.4L1341.6,1496.8L1337.4,1492.5L1338.2,1489.4L1338.9,1484.2L1342.7,1484.2L1339.7,1482.9L1336.7,1477.7L1331.8,1472.5L1332.5,1469.8L1328.8,1465.5Z" fill="#FFFFFF" stroke="none"/>
<path d="M1258.3,1478.5L1259.0,1471.1L1260.5,1468.1L1264.3,1462.4L1268.4,1458.1L1272.2,1456.4L1278.2,1459.4L1275.2,1462.0L1279.0,1465.9L1286.5,1463.8L1290.3,1462.4L1291.1,1459.8L1294.5,1455.5L1297.8,1454.6L1300.5,1455.0L1297.1,1458.5L1294.8,1461.6L1292.9,1466.4L1297.8,1466.8L1303.5,1470.7L1309.5,1478.5L1305.0,1481.2L1296.7,1481.2L1291.8,1479.8L1285.0,1476.8L1279.0,1476.8L1271.5,1480.3L1262.8,1480.3Z" fill="#FFFFFF" stroke="none"/>
<path d="M890.7,1664.7L877.5,1670.4L868.1,1660.4L856.8,1654.3L854.9,1653.0 M850.0,1674.3L854.9,1679.5L860.5,1672.5L868.8,1660.8 M889.6,1654.7L887.7,1645.6L881.6,1639.9L879.4,1629.0L883.1,1626.9L879.8,1623.8L883.5,1611.7 M923.9,1636.9L925.7,1629.9L924.2,1622.5 M939.7,1651.2L937.1,1633.4 M949.1,1649.9L948.7,1635.1 M886.9,1707.3L892.2,1715.2L891.1,1725.6L892.6,1731.3L888.0,1739.1 M893.7,1757.4L900.1,1758.7L915.9,1755.2L920.8,1748.7L934.0,1746.5 M888.8,1736.9L894.5,1742.2L894.8,1757.4L900.1,1763.9L894.5,1777.0L889.9,1794.3L888.8,1805.2L886.9,1816.1L884.3,1833.5L882.0,1850.9L880.5,1864.0L876.7,1877.0L879.8,1884.4L891.8,1886.6L894.1,1894.4 M915.9,1755.2L926.5,1761.7L934.8,1769.1L946.9,1770.9 M935.5,1790.9L933.3,1800.9L932.5,1808.3 M1119.9,1539.0L1133.9,1529.0L1145.2,1520.3L1147.8,1517.7L1145.9,1509.4L1145.2,1506.8 M1185.1,1499.0L1183.6,1508.6L1181.0,1513.8L1188.5,1528.1 M1128.2,1550.8L1134.2,1550.8L1147.0,1560.3L1159.5,1569.9L1168.5,1576.0L1174.6,1575.1L1188.5,1579.5L1197.9,1557.3 M1168.5,1586.4L1168.5,1600.8L1166.3,1608.6L1162.9,1606.4L1161.0,1604.7 M1168.5,1600.8L1178.3,1602.5L1189.6,1603.8L1199.8,1601.6L1204.0,1600.3L1207.4,1592.1L1211.1,1569.5L1210.4,1559.5 M1207.4,1592.1L1207.0,1632.5 M1205.5,1603.4L1207.4,1616.0L1202.5,1624.7L1197.9,1629.9L1194.2,1631.7L1188.9,1638.6 M1243.2,1574.7L1243.2,1591.2L1237.5,1598.6L1237.5,1611.7L1242.4,1621.7 M1247.0,1563.8L1270.7,1563.8L1291.8,1563.8 M1282.0,1639.5L1288.0,1639.5L1296.3,1643.8L1306.5,1641.2L1310.7,1642.1L1315.6,1638.6L1322.0,1638.2L1332.9,1624.7L1333.7,1624.7 M1289.9,1596.9L1281.3,1611.7L1280.9,1618.2 M1310.7,1642.1L1307.3,1666.9 M1280.5,1663.8L1295.2,1675.6L1300.5,1679.9 M1278.6,1643.0L1280.5,1663.8L1264.3,1665.2 M1268.8,1695.6L1276.7,1700.4L1283.1,1709.5L1286.5,1709.5L1305.4,1705.2 M1265.0,1712.6L1270.7,1726.9L1278.2,1729.5L1276.0,1747.4L1273.3,1756.1L1270.3,1756.5L1273.3,1768.2L1276.4,1772.2 M1229.2,1690.0L1236.8,1706.9 M1243.6,1707.3L1242.8,1734.8L1248.1,1736.9L1256.8,1733.9L1265.0,1712.6 M1197.2,1734.8L1206.2,1735.2L1222.8,1736.9L1231.5,1739.1L1231.9,1755.2L1228.1,1767.4L1228.1,1783.0L1214.9,1783.9 M1228.1,1767.4L1239.4,1769.6L1253.7,1764.8L1263.5,1755.6L1255.6,1748.2L1248.1,1736.9 M1231.9,1755.2L1240.5,1737.8L1248.1,1736.9 M1106.7,1596.0L1092.0,1581.2L1090.5,1589.5 M1132.0,1588.6L1128.2,1550.8L1119.9,1539.0 M1142.1,1637.3L1140.6,1629.9L1142.9,1623.8 M1156.5,1633.8L1153.1,1611.2 M1158.7,1632.5L1166.3,1608.6 M1162.9,1632.1L1162.9,1619.9 M1258.3,1400.7L1257.5,1410.2L1259.0,1415.0L1269.2,1419.8L1272.6,1432.9L1280.1,1432.0L1286.2,1439.4L1297.8,1442.4L1302.7,1446.3L1303.5,1450.3L1296.7,1454.6 M1263.2,1398.9L1268.8,1394.2L1265.8,1385.5L1267.7,1379.4L1263.9,1368.5L1260.5,1363.3L1261.7,1358.9L1270.7,1352.8 M1261.7,1358.9L1253.7,1355.9L1249.6,1359.8L1241.7,1359.8L1230.4,1358.9 M1245.1,1373.3L1242.8,1368.5L1241.7,1364.1L1231.9,1359.3L1230.4,1358.9L1220.6,1361.1L1216.0,1363.7L1206.6,1373.3L1198.3,1382.8L1200.2,1392.8L1197.6,1401.5L1194.2,1403.3 M1205.9,1425.5L1207.7,1430.7L1209.2,1437.2L1214.9,1439.8L1224.0,1444.2L1237.9,1445.9L1243.2,1439.0L1241.3,1433.3L1242.4,1428.5L1241.3,1425.0L1238.3,1423.3L1227.0,1422.9L1222.4,1421.1 M1241.3,1425.0L1248.8,1423.3L1253.0,1419.4L1259.0,1415.0 M1232.2,1412.4L1250.7,1415.0L1259.0,1415.0 M1244.3,1410.7L1256.8,1408.1 M1242.4,1428.5L1250.7,1433.7L1268.1,1436.3L1272.6,1432.9 M1243.2,1439.0L1237.9,1445.9L1239.0,1450.7L1246.6,1452.0L1253.0,1449.8L1259.0,1449.8L1264.7,1459.8L1261.3,1462.9 M1239.0,1450.7L1231.9,1449.8L1223.6,1451.6L1216.8,1448.1L1208.5,1447.2L1201.7,1452.4L1190.4,1452.9L1188.5,1452.4L1178.7,1452.9L1183.6,1446.3L1176.8,1444.2L1175.3,1438.5L1175.3,1433.7L1179.5,1425.9 M1178.7,1452.9L1175.3,1458.1L1179.1,1459.8L1181.0,1469.0 M1204.3,1461.1L1207.7,1457.7L1214.9,1457.2L1219.1,1459.8L1224.3,1464.2L1233.4,1462.9L1237.9,1467.2L1237.1,1475.5L1239.4,1479.8L1251.1,1479.8L1254.5,1476.4L1258.3,1478.1 M1224.3,1464.2L1224.7,1472.5L1230.4,1477.2L1232.2,1482.0L1228.5,1487.2 M1237.9,1467.2L1247.0,1469.4L1257.9,1470.3 M1261.3,1462.9L1253.0,1467.7L1237.9,1467.2 M1214.9,1457.2L1219.4,1452.0L1223.6,1451.6 M1233.4,1462.9L1232.2,1458.1L1239.0,1450.7 M1184.4,1418.1L1187.0,1421.1L1193.8,1424.6 M1145.9,1470.7L1155.3,1473.3L1164.4,1474.6 M1119.1,1477.2L1126.3,1477.2L1128.2,1479.8L1124.4,1487.2L1126.3,1493.3L1124.4,1498.1 M1250.7,1482.0L1254.5,1476.4 M1309.5,1478.5L1316.7,1480.7L1319.0,1488.1L1321.6,1486.8 M1303.5,1470.7L1312.9,1472.9L1320.8,1473.3L1327.6,1477.2L1331.8,1472.5 M1316.7,1480.7L1328.0,1480.7L1335.9,1492.9 M1321.6,1497.7L1312.2,1497.7 M1308.4,1504.6L1312.5,1513.8L1319.3,1516.4L1326.5,1516.0 M1290.7,1519.0L1299.7,1520.3L1292.2,1522.5L1296.0,1526.8L1294.1,1529.0L1288.4,1532.5L1284.3,1531.2 M1299.7,1520.3L1313.3,1524.2L1321.2,1532.5L1328.0,1532.9L1332.5,1535.5L1335.9,1537.7 M1360.0,1561.6L1348.7,1576.8L1337.4,1578.6L1329.9,1586.0L1325.7,1584.2L1316.3,1582.9L1314.1,1588.6 M1348.7,1576.8L1360.0,1572.5L1362.3,1563.4L1360.8,1560.8L1363.8,1555.1L1365.3,1551.2 M1347.2,1554.2L1351.0,1559.9L1360.0,1561.6 M1329.1,1465.9L1328.0,1449.0L1331.8,1440.3L1348.7,1435.0L1362.7,1439.4L1375.1,1438.5L1383.8,1438.5L1378.9,1433.5L1384.9,1429.0L1386.4,1424.6L1397.8,1420.2L1409.8,1420.2L1419.6,1419.4L1429.8,1424.6L1441.1,1423.7L1446.0,1427.2L1454.3,1438.1L1467.1,1437.7L1476.2,1442.9L1482.2,1445.5 M1355.9,1497.7L1359.3,1496.8L1368.7,1494.2L1375.9,1496.8L1380.8,1499.9L1383.4,1504.2L1387.6,1505.9L1395.9,1501.6L1403.4,1496.8L1408.3,1498.1L1417.0,1495.9L1422.3,1499.0L1427.9,1499.0L1433.9,1498.1L1436.2,1498.1 M1353.3,1462.4L1363.8,1463.8L1373.2,1461.1L1378.5,1466.8L1384.9,1472.9L1397.4,1469.4L1401.9,1472.5L1401.5,1476.8L1409.1,1480.7L1412.8,1479.4L1420.4,1475.5L1429.8,1474.6L1432.4,1471.1L1439.2,1472.5L1452.8,1474.6L1455.4,1472.9L1457.7,1463.3L1463.7,1461.6L1466.4,1453.7L1473.9,1455.0L1475.8,1448.5L1482.2,1445.5 M1363.8,1463.8L1363.8,1479.8L1367.6,1480.3L1373.6,1473.3L1378.9,1475.9L1379.3,1479.4L1385.7,1480.7L1395.9,1489.4L1403.4,1494.2L1403.4,1496.8 M1420.4,1475.5L1418.1,1483.3L1414.0,1482.5L1410.9,1487.7L1418.5,1487.2L1430.5,1488.1L1431.3,1492.0L1435.1,1492.5L1436.2,1498.1 M1430.5,1488.1L1434.7,1483.8L1441.1,1483.8L1448.6,1478.5L1454.7,1476.4L1455.4,1472.9 M1436.2,1498.1L1433.2,1499.0L1427.5,1500.7L1421.1,1502.5L1422.3,1506.4L1418.9,1512.9L1414.0,1515.5L1414.7,1520.7L1411.3,1521.6L1404.9,1523.3L1403.0,1529.0L1388.3,1532.0L1385.3,1522.9 M1388.3,1532.0L1392.5,1535.5L1391.0,1541.2L1389.5,1540.3L1386.1,1545.5L1384.6,1550.3 M1432.4,1508.6L1438.5,1509.4L1446.0,1505.1L1439.2,1503.3L1436.2,1498.1 M1482.2,1445.5L1487.5,1444.2L1494.6,1440.7L1500.3,1438.5L1510.1,1442.0L1519.5,1443.3L1522.9,1440.3L1522.2,1435.0L1533.1,1435.5L1537.6,1436.3L1538.7,1439.8L1555.7,1440.7L1561.7,1445.0L1573.4,1444.6L1584.0,1441.1L1592.7,1442.4L1602.5,1441.6L1610.0,1444.6L1607.7,1431.1L1618.7,1426.8L1630.0,1429.8L1634.1,1442.0L1646.6,1451.6L1654.5,1450.3L1661.7,1448.5L1659.8,1452.4L1654.9,1464.2L1647.3,1465.1L1647.3,1471.1L1645.1,1475.1 M1482.2,1445.5L1495.4,1462.4L1509.7,1466.4L1515.8,1473.8L1532.7,1473.8L1548.6,1478.5L1564.4,1474.6L1574.2,1469.4L1573.8,1467.7L1584.4,1462.4L1595.3,1456.4L1603.6,1455.0L1601.0,1455.5L1604.0,1453.3L1594.9,1452.0L1588.1,1450.3L1592.7,1442.4 M1621.3,1485.9L1627.3,1481.6L1633.4,1479.0L1636.0,1476.8L1645.1,1475.1 M1434.7,1494.6L1435.5,1485.5L1434.7,1483.8 M1455.4,1472.9L1454.7,1476.4 M1515.0,1531.2L1521.8,1536.4L1522.9,1549.0L1521.0,1555.5L1527.8,1559.9L1526.7,1563.4L1531.2,1565.5L1534.2,1566.4L1534.6,1567.3L1538.0,1562.1L1542.9,1560.8L1549.7,1558.1L1555.0,1560.3L1556.5,1565.5L1561.7,1565.1 M1521.0,1555.5L1520.7,1589.5 M1527.8,1559.9L1530.1,1570.8L1533.5,1574.7L1533.8,1583.4L1524.0,1588.2L1525.6,1600.8L1524.0,1613.0L1524.0,1623.0 M1541.8,1579.9L1547.4,1583.8 M1557.6,1597.7L1549.7,1596.9L1541.8,1597.3L1538.4,1601.2 M1553.8,1618.2L1550.8,1611.2L1557.6,1597.7L1558.4,1592.1 M1530.1,1631.2L1537.6,1632.5 M1450.2,1510.3L1455.8,1505.5L1446.0,1505.1 M1484.8,1540.3L1474.3,1536.8L1458.4,1528.1 M1499.5,1542.9L1499.9,1539.9 M1409.8,1556.4L1412.1,1553.4L1420.4,1553.4L1419.6,1549.9L1417.7,1546.4L1414.7,1542.5L1418.9,1537.7L1423.4,1538.1L1427.2,1533.5L1429.8,1529.1L1433.2,1524.7L1433.2,1521.6L1436.6,1519.0L1433.6,1516.8L1432.1,1514.2L1430.5,1510.3L1432.4,1508.6 M1484.8,1544.7L1477.7,1543.8L1474.3,1543.4L1472.0,1541.2L1466.7,1540.3L1461.8,1538.1L1458.4,1536.0L1454.7,1534.2L1456.2,1530.3L1458.4,1528.1" fill="none" stroke="#FFFFFF" stroke-width="1.4"/>
</g>
<rect x="1787.2" y="1620" width="40" height="280" rx="7" fill="url(#lg)"/>
<text x="1807.3" y="1596.3" text-anchor="middle" font-family="Liberation Sans, sans-serif" font-size="23" fill="#2B2233">High</text>
<text x="1807.3" y="1938.7" text-anchor="middle" font-family="Liberation Sans, sans-serif" font-size="23" fill="#2B2233">Low</text>
</g>
<g font-family="Liberation Sans, sans-serif">
<line x1="2063.0" y1="550.8" x2="3257.0" y2="550.8" stroke="#F3F1F5" stroke-width="2"/>
<line x1="2063.0" y1="627.8" x2="3257.0" y2="627.8" stroke="#F3F1F5" stroke-width="2"/>
<line x1="2063.0" y1="704.8" x2="3257.0" y2="704.8" stroke="#F3F1F5" stroke-width="2"/>
<line x1="2063.0" y1="781.8" x2="3257.0" y2="781.8" stroke="#F3F1F5" stroke-width="2"/>
<line x1="2063.0" y1="858.8" x2="3257.0" y2="858.8" stroke="#F3F1F5" stroke-width="2"/>
<line x1="2063.0" y1="935.8" x2="3257.0" y2="935.8" stroke="#F3F1F5" stroke-width="2"/>
<line x1="2063.0" y1="1012.8" x2="3257.0" y2="1012.8" stroke="#F3F1F5" stroke-width="2"/>
<text x="2045.6" y="559.3" text-anchor="end" font-size="24.5" fill="#80708F">70,000</text>
<text x="2045.6" y="636.3" text-anchor="end" font-size="24.5" fill="#80708F">60,000</text>
<text x="2045.6" y="713.3" text-anchor="end" font-size="24.5" fill="#80708F">50,000</text>
<text x="2045.6" y="790.3" text-anchor="end" font-size="24.5" fill="#80708F">40,000</text>
<text x="2045.6" y="867.3" text-anchor="end" font-size="24.5" fill="#80708F">30,000</text>
<text x="2045.6" y="944.3" text-anchor="end" font-size="24.5" fill="#80708F">20,000</text>
<text x="2045.6" y="1021.3" text-anchor="end" font-size="24.5" fill="#80708F">10,000</text>
<text x="2045.6" y="1098.3" text-anchor="end" font-size="24.5" fill="#80708F">0</text>
<line x1="2063.0" y1="1090" x2="3257.0" y2="1090" stroke="#80708F" stroke-width="2"/>
<line x1="2121.2" y1="1090" x2="2121.2" y2="1100" stroke="#80708F" stroke-width="2"/>
<text x="2121.2" y="1134.2" text-anchor="middle" font-size="24.5" fill="#80708F">12:00 PM</text>
<line x1="2320.2" y1="1090" x2="2320.2" y2="1100" stroke="#80708F" stroke-width="2"/>
<text x="2320.2" y="1134.2" text-anchor="middle" font-size="24.5" fill="#80708F">4:00 PM</text>
<line x1="2519.2" y1="1090" x2="2519.2" y2="1100" stroke="#80708F" stroke-width="2"/>
<text x="2519.2" y="1134.2" text-anchor="middle" font-size="24.5" fill="#80708F">8:00 PM</text>
<line x1="2718.2" y1="1090" x2="2718.2" y2="1100" stroke="#80708F" stroke-width="2"/>
<text x="2718.2" y="1134.2" text-anchor="middle" font-size="24.5" fill="#80708F">12:00 AM</text>
<line x1="2917.2" y1="1090" x2="2917.2" y2="1100" stroke="#80708F" stroke-width="2"/>
<text x="2917.2" y="1134.2" text-anchor="middle" font-size="24.5" fill="#80708F">4:00 AM</text>
<line x1="3116.2" y1="1090" x2="3116.2" y2="1100" stroke="#80708F" stroke-width="2"/>
<text x="3116.2" y="1134.2" text-anchor="middle" font-size="24.5" fill="#80708F">8:00 AM</text>
<path d="M2063.0,992.0 L2067.1,611.2 L2071.2,605.1 L2075.3,609.5 L2079.3,606.4 L2084.1,612.9 L2088.1,611.2 L2096.3,602.0 L2100.3,603.7 L2104.4,616.3 L2108.8,610.5 L2113.6,620.0 L2116.9,620.0 L2121.4,610.5 L2126.4,618.6 L2130.8,618.0 L2137.6,607.1 L2141.7,621.4 L2145.8,616.3 L2151.2,619.0 L2155.3,624.1 L2158.6,618.6 L2162.7,618.6 L2167.1,611.2 L2172.2,613.9 L2177.3,614.6 L2183.1,606.4 L2187.5,616.3 L2191.9,607.1 L2199.3,624.7 L2204.1,640.7 L2208.5,606.4 L2212.9,631.5 L2216.3,635.6 L2220.7,616.3 L2228.1,625.4 L2233.2,662.0 L2237.3,645.8 L2242.0,679.0 L2246.1,664.1 L2250.2,684.1 L2254.2,673.2 L2258.3,682.4 L2262.4,666.1 L2266.4,682.4 L2270.5,674.2 L2279.0,712.9 L2282.7,679.7 L2287.5,712.9 L2291.5,722.0 L2295.6,748.5 L2299.7,725.8 L2303.7,724.1 L2312.2,762.0 L2316.3,765.4 L2320.7,759.7 L2324.7,765.4 L2329.2,761.0 L2336.6,744.4 L2341.7,767.8 L2346.1,766.4 L2350.2,769.8 L2353.6,762.7 L2358.6,778.3 L2362.0,779.3 L2366.1,768.1 L2370.5,769.8 L2374.6,791.9 L2378.3,761.0 L2383.4,781.4 L2387.1,786.1 L2391.2,800.3 L2395.3,784.1 L2399.3,802.0 L2403.4,796.9 L2407.1,801.0 L2412.2,774.6 L2415.6,790.8 L2419.7,742.7 L2424.7,746.8 L2428.1,744.1 L2432.5,752.9 L2436.6,744.4 L2441.0,737.6 L2445.1,725.8 L2453.6,755.3 L2458.0,773.2 L2462.0,767.8 L2466.1,784.1 L2470.5,767.8 L2474.6,763.1 L2478.0,734.6 L2483.1,779.3 L2486.8,787.5 L2490.8,736.6 L2495.3,763.7 L2499.3,771.5 L2503.7,795.9 L2507.8,780.0 L2512.2,788.1 L2516.3,780.7 L2519.7,767.8 L2524.1,804.4 L2528.1,816.3 L2532.2,801.0 L2536.6,799.3 L2541.0,780.0 L2545.1,783.4 L2549.2,803.7 L2553.2,792.5 L2558.6,800.3 L2562.0,805.4 L2566.1,807.1 L2569.5,816.3 L2573.9,786.8 L2581.7,816.3 L2585.8,758.6 L2590.8,790.8 L2594.9,798.3 L2598.6,812.9 L2602.7,762.0 L2606.8,764.7 L2611.2,774.6 L2615.3,719.7 L2619.7,731.5 L2623.7,731.5 L2628.1,751.9 L2632.5,755.3 L2635.9,745.1 L2640.0,706.8 L2644.4,733.9 L2648.5,731.5 L2652.9,708.8 L2656.9,714.6 L2660.3,724.1 L2663.7,717.0 L2668.8,682.4 L2672.9,648.5 L2677.3,672.9 L2680.7,663.8 L2685.4,639.0 L2689.5,645.8 L2693.6,637.3 L2697.6,638.3 L2701.7,650.2 L2706.1,631.6 L2711.2,614.6 L2717.3,605.1 L2722.1,607.1 L2727.5,603.1 L2734.9,600.4 L2741.7,596.3 L2748.5,597.0 L2753.6,598.3 L2760.4,594.9 L2764.8,598.3 L2770.6,596.0 L2779.0,595.3 L2785.1,590.9 L2789.2,592.9 L2794.3,590.9 L2799.4,594.3 L2806.2,593.2 L2816.3,594.9 L2829.9,596.0 L2843.5,597.0 L2860.4,593.6 L2865.5,597.6 L2872.3,596.0 L2877.4,599.3 L2884.8,595.3 L2890.9,601.7 L2897.0,611.2 L2901.1,603.8 L2906.2,612.2 L2909.6,606.1 L2916.4,604.4 L2921.5,615.3 L2925.9,605.1 L2931.6,606.8 L2938.4,604.4 L2945.2,603.1 L2951.3,598.3 L2958.8,600.4 L2968.9,597.0 L2979.1,597.0 L2992.7,595.3 L3006.2,596.3 L3018.1,594.3 L3033.4,592.9 L3040.1,594.9 L3052.0,593.6 L3063.9,592.6 L3074.7,595.3 L3083.5,585.1 L3091.0,595.3 L3097.8,593.2 L3108.0,593.6 L3116.4,595.3 L3121.5,593.2 L3128.3,597.6 L3135.1,594.3 L3145.3,596.0 L3153.7,599.3 L3158.8,602.1 L3165.6,598.3 L3175.8,600.0 L3185.9,601.0 L3196.1,602.7 L3201.2,605.4 L3209.7,603.8 L3219.9,605.1 L3223.9,611.2 L3230.0,602.7 L3234.1,602.1 L3238.5,606.1 L3247.0,605.1 L3250.4,599.3 L3253.8,604.4 L3257.0,689.2 L3257.0,1089 L2063.0,1089 Z" fill="#444674"/>
<line x1="2254" y1="1062" x2="2254" y2="1089" stroke="#A9A5C4" stroke-width="1.5"/>
<line x1="2063.0" y1="1090" x2="3257.0" y2="1090" stroke="#80708F" stroke-width="2"/>
<line x1="646.6" y1="822.4" x2="1841.5" y2="822.4" stroke="#F3F1F5" stroke-width="2"/>
<line x1="646.6" y1="860.5" x2="1841.5" y2="860.5" stroke="#F3F1F5" stroke-width="2"/>
<line x1="646.6" y1="898.7" x2="1841.5" y2="898.7" stroke="#F3F1F5" stroke-width="2"/>
<line x1="646.6" y1="936.9" x2="1841.5" y2="936.9" stroke="#F3F1F5" stroke-width="2"/>
<line x1="646.6" y1="975.0" x2="1841.5" y2="975.0" stroke="#F3F1F5" stroke-width="2"/>
<line x1="646.6" y1="1013.2" x2="1841.5" y2="1013.2" stroke="#F3F1F5" stroke-width="2"/>
<line x1="646.6" y1="1051.3" x2="1841.5" y2="1051.3" stroke="#F3F1F5" stroke-width="2"/>
<text x="629.4" y="830.9" text-anchor="end" font-size="24.5" fill="#80708F">70,000</text>
<text x="629.4" y="869.0" text-anchor="end" font-size="24.5" fill="#80708F">60,000</text>
<text x="629.4" y="907.2" text-anchor="end" font-size="24.5" fill="#80708F">50,000</text>
<text x="629.4" y="945.4" text-anchor="end" font-size="24.5" fill="#80708F">40,000</text>
<text x="629.4" y="983.5" text-anchor="end" font-size="24.5" fill="#80708F">30,000</text>
<text x="629.4" y="1021.7" text-anchor="end" font-size="24.5" fill="#80708F">20,000</text>
<text x="629.4" y="1059.8" text-anchor="end" font-size="24.5" fill="#80708F">10,000</text>
<text x="629.4" y="1098.0" text-anchor="end" font-size="24.5" fill="#80708F">0</text>
<line x1="646.6" y1="1090" x2="1841.5" y2="1090" stroke="#80708F" stroke-width="2"/>
<line x1="704.9" y1="1090" x2="704.9" y2="1100" stroke="#80708F" stroke-width="2"/>
<text x="704.9" y="1134.5" text-anchor="middle" font-size="24.5" fill="#80708F">12:00 PM</text>
<line x1="904.0" y1="1090" x2="904.0" y2="1100" stroke="#80708F" stroke-width="2"/>
<text x="904.0" y="1134.5" text-anchor="middle" font-size="24.5" fill="#80708F">4:00 PM</text>
<line x1="1103.2" y1="1090" x2="1103.2" y2="1100" stroke="#80708F" stroke-width="2"/>
<text x="1103.2" y="1134.5" text-anchor="middle" font-size="24.5" fill="#80708F">8:00 PM</text>
<line x1="1302.3" y1="1090" x2="1302.3" y2="1100" stroke="#80708F" stroke-width="2"/>
<text x="1302.3" y="1134.5" text-anchor="middle" font-size="24.5" fill="#80708F">12:00 AM</text>
<line x1="1501.5" y1="1090" x2="1501.5" y2="1100" stroke="#80708F" stroke-width="2"/>
<text x="1501.5" y="1134.5" text-anchor="middle" font-size="24.5" fill="#80708F">4:00 AM</text>
<line x1="1700.6" y1="1090" x2="1700.6" y2="1100" stroke="#80708F" stroke-width="2"/>
<text x="1700.6" y="1134.5" text-anchor="middle" font-size="24.5" fill="#80708F">8:00 AM</text>
<path d="M646.6,1086.4 L652.6,1082.5 L658.6,1079.2 L664.6,1077.6 L670.6,1077.6 L676.6,1078.2 L682.6,1078.3 L688.6,1077.4 L694.6,1078.1 L700.6,1078.1 L706.6,1077.3 L712.6,1077.9 L718.7,1077.5 L724.7,1077.9 L730.7,1077.8 L736.7,1078.3 L742.7,1077.8 L748.7,1077.6 L754.7,1078.0 L760.7,1077.8 L766.7,1077.9 L772.7,1078.6 L778.7,1077.9 L784.7,1078.1 L790.7,1078.5 L796.7,1078.9 L802.7,1078.0 L808.7,1078.5 L814.7,1078.3 L820.7,1078.1 L826.7,1078.4 L832.7,1078.2 L838.7,1078.9 L844.7,1078.5 L850.8,1078.9 L856.8,1078.4 L862.8,1078.5 L868.8,1079.5 L874.8,1079.5 L880.8,1079.5 L886.8,1078.7 L892.8,1079.4 L898.8,1079.2 L904.8,1079.7 L910.8,1079.5 L916.8,1079.7 L922.8,1079.8 L928.8,1079.7 L934.8,1079.7 L940.8,1079.4 L946.8,1079.8 L952.8,1079.6 L958.8,1079.7 L964.8,1079.6 L970.8,1080.1 L976.8,1080.7 L982.9,1080.0 L988.9,1080.0 L994.9,1080.1 L1000.9,1080.6 L1006.9,1080.5 L1012.9,1081.2 L1018.9,1080.5 L1024.9,1080.9 L1030.9,1081.3 L1036.9,1081.6 L1042.9,1080.8 L1048.9,1080.7 L1054.9,1081.8 L1060.9,1081.1 L1066.9,1081.6 L1072.9,1082.0 L1078.9,1081.9 L1084.9,1081.4 L1090.9,1081.4 L1096.9,1082.4 L1102.9,1081.8 L1108.9,1082.6 L1115.0,1081.9 L1121.0,1082.4 L1127.0,1081.8 L1133.0,1081.8 L1139.0,1082.4 L1145.0,1081.9 L1151.0,1082.7 L1157.0,1083.0 L1163.0,1082.5 L1169.0,1083.2 L1175.0,1083.1 L1181.0,1082.9 L1187.0,1082.7 L1193.0,1083.3 L1199.0,1083.5 L1205.0,1082.6 L1211.0,1083.3 L1217.0,1082.6 L1223.0,1082.7 L1229.0,1083.4 L1235.0,1083.4 L1241.0,1083.3 L1247.1,1083.2 L1253.1,1083.3 L1259.1,1083.4 L1265.1,1083.4 L1271.1,1083.1 L1277.1,1083.6 L1283.1,1083.7 L1289.1,1083.4 L1295.1,1084.0 L1301.1,1084.0 L1307.1,1083.3 L1313.1,1083.8 L1319.1,1083.8 L1325.1,1084.5 L1331.1,1084.0 L1337.1,1083.9 L1343.1,1084.6 L1349.1,1083.9 L1355.1,1084.0 L1361.1,1084.6 L1367.1,1084.0 L1373.1,1084.1 L1379.2,1083.8 L1385.2,1084.1 L1391.2,1083.7 L1397.2,1083.6 L1403.2,1084.3 L1409.2,1084.2 L1415.2,1083.5 L1421.2,1083.1 L1427.2,1083.8 L1433.2,1083.5 L1439.2,1083.3 L1445.2,1083.6 L1451.2,1083.5 L1457.2,1083.5 L1463.2,1083.4 L1469.2,1083.0 L1475.2,1083.3 L1481.2,1083.2 L1487.2,1082.5 L1493.2,1083.0 L1499.2,1082.0 L1505.2,1081.5 L1511.3,1081.6 L1517.3,1081.4 L1523.3,1080.4 L1529.3,1080.7 L1535.3,1080.4 L1541.3,1079.7 L1547.3,1079.2 L1553.3,1079.6 L1559.3,1079.0 L1565.3,1078.8 L1571.3,1077.9 L1577.3,1078.1 L1583.3,1077.4 L1589.3,1077.9 L1595.3,1077.4 L1601.3,1076.8 L1607.3,1076.4 L1613.3,1076.8 L1619.3,1077.0 L1625.3,1077.0 L1631.3,1076.5 L1637.3,1076.8 L1643.4,1076.0 L1649.4,1075.9 L1655.4,1076.6 L1661.4,1076.4 L1667.4,1075.7 L1673.4,1075.8 L1679.4,1075.6 L1685.4,1076.0 L1691.4,1076.2 L1697.4,1075.9 L1703.4,1075.3 L1709.4,1075.8 L1715.4,1075.6 L1721.4,1075.5 L1727.4,1075.6 L1733.4,1075.8 L1739.4,1075.4 L1745.4,1076.4 L1751.4,1076.8 L1757.4,1075.9 L1763.4,1076.1 L1769.4,1076.2 L1775.5,1077.0 L1781.5,1076.6 L1787.5,1076.8 L1793.5,1077.8 L1799.5,1077.3 L1805.5,1077.4 L1811.5,1077.8 L1817.5,1078.1 L1823.5,1078.5 L1829.5,1078.7 L1835.5,1079.0 L1841.5,1079.3" fill="none" stroke="#444674" stroke-width="4" stroke-linejoin="round"/>
<path d="M646.6,1041.0 L650.7,852.3 L654.8,849.3 L658.9,851.5 L662.9,850.0 L667.7,853.1 L671.8,852.3 L679.9,847.8 L684.0,848.6 L688.0,854.8 L692.4,852.0 L697.2,856.7 L700.6,856.7 L705.0,852.0 L710.1,856.0 L714.5,855.7 L721.3,850.3 L725.4,857.3 L729.4,854.8 L734.9,856.2 L738.9,858.7 L742.3,856.0 L746.4,856.0 L750.8,852.3 L755.9,853.7 L761.0,854.0 L766.7,850.0 L771.2,854.8 L775.6,850.3 L783.0,859.0 L787.8,866.9 L792.2,850.0 L796.6,862.4 L800.0,864.4 L804.4,854.8 L811.9,859.4 L816.9,877.5 L821.0,869.4 L825.8,885.9 L829.8,878.5 L833.9,888.4 L838.0,883.0 L842.1,887.6 L846.1,879.5 L850.2,887.6 L854.3,883.6 L862.7,902.7 L866.5,886.2 L871.2,902.7 L875.3,907.2 L879.4,920.3 L883.4,909.1 L887.5,908.2 L896.0,927.1 L900.1,928.7 L904.5,925.9 L908.5,928.7 L913.0,926.6 L920.4,918.3 L925.5,929.9 L929.9,929.2 L934.0,930.9 L937.4,927.4 L942.5,935.1 L945.9,935.6 L949.9,930.1 L954.3,930.9 L958.4,941.8 L962.1,926.6 L967.2,936.6 L971.0,939.0 L975.0,946.0 L979.1,938.0 L983.2,946.9 L987.2,944.4 L991.0,946.4 L996.1,933.3 L999.5,941.3 L1003.5,917.5 L1008.6,919.5 L1012.0,918.2 L1016.4,922.5 L1020.5,918.3 L1024.9,915.0 L1029.0,909.1 L1037.5,923.7 L1041.9,932.6 L1045.9,929.9 L1050.0,938.0 L1054.4,929.9 L1058.5,927.6 L1061.9,913.5 L1067.0,935.6 L1070.7,939.7 L1074.8,914.5 L1079.2,927.9 L1083.3,931.8 L1087.7,943.9 L1091.7,936.0 L1096.1,940.0 L1100.2,936.3 L1103.6,929.9 L1108.0,948.1 L1112.1,953.9 L1116.2,946.4 L1120.6,945.5 L1125.0,936.0 L1129.0,937.6 L1133.1,947.7 L1137.2,942.2 L1142.6,946.0 L1146.0,948.6 L1150.1,949.4 L1153.5,953.9 L1157.9,939.3 L1165.7,953.9 L1169.8,925.4 L1174.8,941.3 L1178.9,945.0 L1182.6,952.3 L1186.7,927.1 L1190.8,928.4 L1195.2,933.3 L1199.3,906.1 L1203.7,911.9 L1207.8,911.9 L1212.2,922.0 L1216.6,923.7 L1220.0,918.7 L1224.0,899.7 L1228.4,913.1 L1232.5,911.9 L1236.9,900.7 L1241.0,903.5 L1244.4,908.3 L1247.8,904.8 L1252.9,887.6 L1257.0,870.8 L1261.4,882.9 L1264.8,878.4 L1269.5,866.1 L1273.6,869.5 L1277.7,865.3 L1281.7,865.8 L1285.8,871.6 L1290.2,862.4 L1295.3,854.0 L1301.4,849.3 L1306.2,850.3 L1311.6,848.3 L1319.1,846.9 L1325.8,844.9 L1332.6,845.3 L1337.7,845.9 L1344.5,844.3 L1348.9,845.9 L1354.7,844.8 L1363.2,844.4 L1369.3,842.2 L1373.4,843.2 L1378.4,842.2 L1383.5,843.9 L1390.3,843.4 L1400.5,844.3 L1414.1,844.8 L1427.6,845.3 L1444.6,843.6 L1449.7,845.6 L1456.5,844.8 L1461.6,846.4 L1469.0,844.4 L1475.2,847.6 L1481.3,852.3 L1485.3,848.6 L1490.4,852.8 L1493.8,849.8 L1500.6,849.0 L1505.7,854.3 L1510.1,849.3 L1515.9,850.1 L1522.7,849.0 L1529.5,848.3 L1535.6,845.9 L1543.0,846.9 L1553.2,845.3 L1563.4,845.3 L1577.0,844.4 L1590.5,844.9 L1602.4,843.9 L1617.7,843.2 L1624.5,844.3 L1636.3,843.6 L1648.2,843.1 L1659.1,844.4 L1667.9,839.4 L1675.4,844.4 L1682.2,843.4 L1692.3,843.6 L1700.8,844.4 L1705.9,843.4 L1712.7,845.6 L1719.5,843.9 L1729.7,844.8 L1738.2,846.4 L1743.2,847.8 L1750.0,845.9 L1760.2,846.8 L1770.4,847.3 L1780.6,848.1 L1785.7,849.5 L1794.1,848.6 L1804.3,849.3 L1808.4,852.3 L1814.5,848.1 L1818.6,847.8 L1823.0,849.8 L1831.5,849.3 L1834.9,846.4 L1838.3,849.0 L1841.5,891.0" fill="none" stroke="#F2B712" stroke-width="4" stroke-linejoin="round"/>
<line x1="2043.4" y1="1367.0" x2="3257.0" y2="1367.0" stroke="#F3F1F5" stroke-width="2"/>
<line x1="2043.4" y1="1411.6" x2="3257.0" y2="1411.6" stroke="#F3F1F5" stroke-width="2"/>
<line x1="2043.4" y1="1456.2" x2="3257.0" y2="1456.2" stroke="#F3F1F5" stroke-width="2"/>
<line x1="2043.4" y1="1500.8" x2="3257.0" y2="1500.8" stroke="#F3F1F5" stroke-width="2"/>
<line x1="2043.4" y1="1545.4" x2="3257.0" y2="1545.4" stroke="#F3F1F5" stroke-width="2"/>
<line x1="2043.4" y1="1590.0" x2="3257.0" y2="1590.0" stroke="#F3F1F5" stroke-width="2"/>
<text x="2026.6" y="1375.5" text-anchor="end" font-size="24.5" fill="#80708F">1,200</text>
<text x="2026.6" y="1420.1" text-anchor="end" font-size="24.5" fill="#80708F">1,000</text>
<text x="2026.6" y="1464.7" text-anchor="end" font-size="24.5" fill="#80708F">800</text>
<text x="2026.6" y="1509.3" text-anchor="end" font-size="24.5" fill="#80708F">600</text>
<text x="2026.6" y="1553.9" text-anchor="end" font-size="24.5" fill="#80708F">400</text>
<text x="2026.6" y="1598.5" text-anchor="end" font-size="24.5" fill="#80708F">200</text>
<text x="2026.6" y="1643.1" text-anchor="end" font-size="24.5" fill="#80708F">0</text>
<line x1="2043.4" y1="1634.6" x2="3257.0" y2="1634.6" stroke="#80708F" stroke-width="2"/>
<line x1="2102.6" y1="1634.6" x2="2102.6" y2="1644.6" stroke="#80708F" stroke-width="2"/>
<text x="2102.6" y="1678.1" text-anchor="middle" font-size="24.5" fill="#80708F">12:00 PM</text>
<line x1="2304.8" y1="1634.6" x2="2304.8" y2="1644.6" stroke="#80708F" stroke-width="2"/>
<text x="2304.8" y="1678.1" text-anchor="middle" font-size="24.5" fill="#80708F">4:00 PM</text>
<line x1="2507.1" y1="1634.6" x2="2507.1" y2="1644.6" stroke="#80708F" stroke-width="2"/>
<text x="2507.1" y="1678.1" text-anchor="middle" font-size="24.5" fill="#80708F">8:00 PM</text>
<line x1="2709.4" y1="1634.6" x2="2709.4" y2="1644.6" stroke="#80708F" stroke-width="2"/>
<text x="2709.4" y="1678.1" text-anchor="middle" font-size="24.5" fill="#80708F">12:00 AM</text>
<line x1="2911.6" y1="1634.6" x2="2911.6" y2="1644.6" stroke="#80708F" stroke-width="2"/>
<text x="2911.6" y="1678.1" text-anchor="middle" font-size="24.5" fill="#80708F">4:00 AM</text>
<line x1="3113.9" y1="1634.6" x2="3113.9" y2="1644.6" stroke="#80708F" stroke-width="2"/>
<text x="3113.9" y="1678.1" text-anchor="middle" font-size="24.5" fill="#80708F">8:00 AM</text>
<path d="M2043.4,1631.3 L2047.3,1617.4 L2051.7,1589.0 L2056.2,1617.4 L2060.1,1604.9 L2064.8,1610.4 L2076.0,1606.3 L2081.5,1610.4 L2087.1,1618.8 L2095.5,1622.4 L2103.0,1615.2 L2106.6,1616.9 L2110.8,1611.8 L2115.0,1570.1 L2119.1,1397.4 L2123.3,1611.8 L2126.9,1619.6 L2131.7,1616.0 L2135.8,1617.4 L2140.9,1624.4 L2148.4,1621.6 L2154.0,1615.2 L2159.5,1612.4 L2165.1,1612.4 L2169.3,1604.9 L2173.5,1610.4 L2178.2,1566.7 L2183.2,1611.8 L2187.4,1614.6 L2191.6,1618.8 L2198.5,1620.2 L2204.1,1617.4 L2208.3,1620.8 L2212.5,1617.4 L2216.6,1624.4 L2225.0,1623.8 L2230.0,1618.0 L2234.7,1616.0 L2238.9,1619.6 L2243.1,1625.8 L2250.1,1621.6 L2254.2,1624.4 L2258.4,1603.5 L2264.0,1611.8 L2268.2,1611.8 L2272.3,1614.6 L2276.5,1611.3 L2279.9,1596.5 L2284.0,1610.4 L2289.1,1624.4 L2297.4,1622.4 L2304.4,1620.2 L2308.6,1620.8 L2313.6,1614.1 L2316.9,1624.4 L2322.5,1614.6 L2328.1,1609.9 L2332.2,1613.2 L2339.2,1621.6 L2347.5,1624.4 L2355.9,1620.8 L2360.1,1624.4 L2364.3,1623.0 L2368.4,1624.4 L2372.6,1620.2 L2381.0,1616.0 L2386.5,1621.6 L2394.9,1621.6 L2400.5,1623.8 L2407.4,1621.6 L2414.4,1618.8 L2418.6,1624.4 L2425.5,1607.7 L2431.1,1604.0 L2436.7,1618.8 L2442.3,1624.4 L2447.8,1621.6 L2453.4,1624.4 L2460.4,1621.6 L2465.9,1618.8 L2470.1,1619.6 L2474.3,1600.7 L2478.5,1596.5 L2482.6,1602.1 L2486.8,1625.8 L2495.2,1625.8 L2503.5,1624.4 L2511.9,1616.9 L2517.5,1624.4 L2525.8,1625.8 L2532.8,1627.2 L2537.0,1607.7 L2541.1,1624.4 L2548.1,1625.8 L2553.7,1624.4 L2559.2,1623.0 L2563.4,1621.6 L2569.0,1624.4 L2574.6,1618.8 L2580.1,1624.4 L2587.1,1624.4 L2592.7,1619.6 L2596.9,1619.6 L2600.2,1595.7 L2604.4,1624.4 L2615.0,1624.4 L2620.5,1620.2 L2624.7,1625.8 L2631.7,1624.4 L2637.8,1609.6 L2642.8,1625.8 L2644.2,1624.6 L2649.9,1619.5 L2655.6,1624.6 L2662.6,1622.3 L2668.3,1621.2 L2674.0,1619.5 L2679.6,1610.4 L2683.9,1616.6 L2689.5,1616.1 L2693.8,1620.3 L2699.4,1621.2 L2706.5,1623.1 L2713.6,1616.6 L2719.3,1617.5 L2724.9,1610.4 L2730.6,1598.5 L2734.8,1597.7 L2740.5,1616.1 L2746.1,1618.3 L2751.8,1621.7 L2756.0,1620.3 L2761.7,1614.6 L2767.4,1616.1 L2772.5,1618.9 L2777.3,1593.4 L2781.5,1614.6 L2788.6,1610.4 L2792.8,1617.5 L2798.5,1610.4 L2802.8,1609.0 L2808.4,1616.1 L2814.1,1613.2 L2819.7,1613.2 L2824.0,1604.7 L2827.7,1588.3 L2832.5,1607.6 L2836.7,1604.7 L2841.0,1614.6 L2849.5,1621.2 L2856.5,1623.1 L2863.6,1613.8 L2867.9,1614.6 L2872.1,1618.9 L2880.0,1611.8 L2883.4,1616.1 L2887.1,1568.5 L2891.9,1609.0 L2896.2,1622.3 L2900.4,1618.9 L2906.1,1621.7 L2911.7,1612.7 L2917.4,1616.6 L2923.0,1616.1 L2928.7,1614.6 L2934.4,1600.5 L2938.6,1594.0 L2942.3,1579.8 L2947.1,1584.9 L2951.4,1616.6 L2956.4,1624.6 L2962.7,1614.6 L2969.7,1616.1 L2975.4,1616.6 L2979.7,1613.2 L2983.9,1614.6 L2989.6,1608.1 L2993.8,1609.0 L2998.1,1617.5 L3005.1,1616.9 L3010.8,1614.6 L3016.5,1601.9 L3021.5,1577.9 L3024.9,1589.2 L3030.0,1503.4 L3034.8,1613.2 L3041.9,1613.8 L3047.6,1617.5 L3051.8,1621.7 L3057.5,1614.6 L3061.7,1613.2 L3067.4,1606.2 L3073.1,1617.5 L3077.3,1617.5 L3081.0,1406.0 L3085.8,1603.3 L3090.0,1614.6 L3094.3,1609.8 L3098.5,1613.2 L3104.2,1616.1 L3112.7,1613.8 L3118.3,1612.7 L3122.6,1601.9 L3126.8,1609.0 L3131.1,1582.1 L3136.7,1606.2 L3143.8,1597.7 L3149.5,1623.1 L3156.6,1616.1 L3162.2,1618.9 L3167.9,1609.0 L3173.5,1617.5 L3179.2,1614.6 L3184.9,1601.3 L3189.7,1593.4 L3194.8,1620.3 L3201.8,1617.5 L3206.1,1616.6 L3211.8,1618.9 L3217.4,1610.4 L3223.1,1614.6 L3230.2,1610.4 L3235.0,1617.5 L3240.1,1592.0 L3245.2,1616.1 L3248.5,1558.0 L3252.8,1555.2 L3257.0,1566.5" fill="none" stroke="#444674" stroke-width="4" stroke-linejoin="round"/>
<path d="M2043.4,1634.2 L2047.6,1634.2 L2051.9,1629.5 L2056.1,1633.7 L2060.3,1628.6 L2064.5,1629.2 L2068.8,1631.2 L2073.0,1627.2 L2077.2,1631.4 L2081.5,1627.8 L2085.7,1631.1 L2089.9,1630.9 L2094.1,1627.9 L2098.4,1624.3 L2102.6,1630.6 L2106.8,1629.7 L2111.1,1626.1 L2115.3,1623.2 L2119.5,1626.6 L2123.7,1628.2 L2128.0,1623.0 L2132.2,1631.3 L2136.4,1624.0 L2140.7,1629.1 L2144.9,1630.4 L2149.1,1630.7 L2153.3,1628.9 L2157.6,1624.4 L2161.8,1630.1 L2166.0,1626.5 L2170.3,1626.0 L2174.5,1628.4 L2178.7,1613.0 L2182.9,1631.1 L2187.2,1631.2 L2191.4,1629.9 L2195.6,1625.6 L2199.9,1627.9 L2204.1,1628.9 L2208.3,1626.5 L2212.5,1627.7 L2216.8,1629.0 L2221.0,1624.6 L2225.2,1625.5 L2229.5,1629.5 L2233.7,1626.6 L2237.9,1627.0 L2242.1,1623.9 L2246.4,1625.2 L2250.6,1629.1 L2254.8,1623.0 L2259.1,1630.6 L2263.3,1628.0 L2267.5,1624.9 L2271.7,1630.3 L2276.0,1627.3 L2280.2,1631.4 L2284.4,1625.7 L2288.7,1624.9 L2292.9,1626.6 L2297.1,1623.9 L2301.3,1628.9 L2305.6,1625.5 L2309.8,1626.4 L2314.0,1626.5 L2318.3,1627.6 L2322.5,1624.2 L2326.7,1623.3 L2330.9,1627.5 L2335.2,1625.8 L2339.4,1631.2 L2343.6,1625.4 L2347.9,1625.9 L2352.1,1622.8 L2356.3,1624.4 L2360.5,1629.2 L2364.8,1628.3 L2369.0,1625.7 L2373.2,1631.5 L2377.5,1627.6 L2381.7,1576.2 L2385.9,1630.7 L2390.1,1631.2 L2394.4,1624.8 L2398.6,1630.5 L2402.8,1629.5 L2407.1,1628.2 L2411.3,1623.9 L2415.5,1631.0 L2419.7,1627.7 L2424.0,1626.8 L2428.2,1623.8 L2432.4,1624.4 L2436.7,1624.0 L2440.9,1629.2 L2445.1,1628.0 L2449.3,1628.5 L2453.6,1623.8 L2457.8,1623.2 L2462.0,1630.4 L2466.3,1630.1 L2470.5,1629.6 L2474.7,1629.6 L2478.9,1627.4 L2483.2,1626.4 L2487.4,1629.4 L2491.6,1631.7 L2495.9,1628.0 L2500.1,1628.4 L2504.3,1626.6 L2508.5,1623.2 L2512.8,1625.5 L2517.0,1627.1 L2521.2,1626.2 L2525.5,1625.7 L2529.7,1631.2 L2533.9,1623.7 L2538.1,1624.7 L2542.4,1623.9 L2546.6,1624.6 L2550.8,1628.2 L2555.1,1628.1 L2559.3,1630.8 L2563.5,1626.0 L2567.7,1631.1 L2572.0,1631.1 L2576.2,1629.8 L2580.4,1630.3 L2584.7,1628.7 L2588.9,1631.2 L2593.1,1631.7 L2597.3,1630.4 L2601.6,1610.1 L2605.8,1628.5 L2610.0,1631.5 L2614.3,1623.9 L2618.5,1626.2 L2622.7,1630.4 L2626.9,1629.5 L2631.2,1628.6 L2635.4,1628.5 L2639.6,1630.6 L2643.9,1624.1 L2648.1,1622.8 L2652.3,1627.5 L2656.5,1627.4 L2660.8,1630.9 L2665.0,1630.8 L2669.2,1628.6 L2673.5,1629.3 L2677.7,1624.3 L2681.9,1630.3 L2686.1,1631.5 L2690.4,1623.2 L2694.6,1627.0 L2698.8,1630.4 L2703.1,1626.9 L2707.3,1631.5 L2711.5,1621.0 L2715.7,1617.0 L2720.0,1618.0 L2724.2,1619.5 L2728.4,1623.4 L2732.7,1622.4 L2736.9,1624.2 L2741.1,1618.8 L2745.3,1620.9 L2749.6,1618.7 L2753.8,1622.7 L2758.0,1623.7 L2762.3,1618.4 L2766.5,1616.9 L2770.7,1618.1 L2774.9,1618.5 L2779.2,1604.7 L2783.4,1619.1 L2787.6,1623.7 L2791.9,1621.1 L2796.1,1622.5 L2800.3,1625.4 L2804.5,1625.4 L2808.8,1623.2 L2813.0,1623.4 L2817.2,1619.5 L2821.5,1617.1 L2825.7,1621.7 L2829.9,1617.3 L2834.1,1616.9 L2838.4,1617.2 L2842.6,1622.4 L2846.8,1623.7 L2851.1,1623.7 L2855.3,1623.9 L2859.5,1623.9 L2863.7,1620.1 L2868.0,1617.6 L2872.2,1618.2 L2876.4,1621.4 L2880.7,1619.9 L2884.9,1618.5 L2889.1,1624.9 L2893.3,1619.8 L2897.6,1617.6 L2901.8,1618.7 L2906.0,1619.0 L2910.3,1621.4 L2914.5,1624.1 L2918.7,1618.6 L2922.9,1622.7 L2927.2,1618.5 L2931.4,1617.0 L2935.6,1622.1 L2939.9,1622.1 L2944.1,1617.2 L2948.3,1619.2 L2952.5,1624.2 L2956.8,1624.5 L2961.0,1624.3 L2965.2,1617.6 L2969.5,1618.5 L2973.7,1624.4 L2977.9,1618.3 L2982.1,1616.9 L2986.4,1619.8 L2990.6,1622.6 L2994.8,1620.8 L2999.1,1624.5 L3003.3,1625.6 L3007.5,1617.0 L3011.7,1619.9 L3016.0,1621.0 L3020.2,1617.4 L3024.4,1621.8 L3028.7,1617.9 L3032.9,1618.3 L3037.1,1616.8 L3041.3,1623.4 L3045.6,1623.1 L3049.8,1623.5 L3054.0,1620.4 L3058.3,1623.4 L3062.5,1621.9 L3066.7,1624.5 L3070.9,1617.6 L3075.2,1622.5 L3079.4,1621.6 L3083.6,1620.5 L3087.9,1617.6 L3092.1,1621.9 L3096.3,1612.3 L3100.5,1621.2 L3104.8,1620.9 L3109.0,1621.0 L3113.2,1625.5 L3117.5,1621.8 L3121.7,1624.0 L3125.9,1625.6 L3130.1,1618.6 L3134.4,1624.1 L3138.6,1621.5 L3142.8,1619.2 L3147.1,1620.7 L3151.3,1622.8 L3155.5,1621.1 L3159.7,1620.7 L3164.0,1618.7 L3168.2,1624.7 L3172.4,1620.7 L3176.7,1623.5 L3180.9,1623.2 L3185.1,1618.8 L3189.3,1621.2 L3193.6,1620.7 L3197.8,1618.9 L3202.0,1617.5 L3206.3,1621.7 L3210.5,1620.2 L3214.7,1621.2 L3218.9,1621.1 L3223.2,1619.5 L3227.4,1621.6 L3231.6,1620.9 L3235.9,1621.4 L3240.1,1617.3 L3244.3,1619.4 L3248.5,1617.9 L3252.8,1617.3 L3257.0,1623.4" fill="none" stroke="#F2B712" stroke-width="4" stroke-linejoin="round"/>
<circle cx="1965.2" cy="485" r="7.8" fill="#444674"/>
<text x="1983.7" y="492.5" font-size="24.2" letter-spacing="0" fill="#3E3446">count(&#8201;)</text>
<circle cx="549.9" cy="757.5" r="7.8" fill="#444674"/>
<text x="568.4" y="765.0" font-size="24.2" letter-spacing="0.44" fill="#3E3446">count_unique(user)</text>
<circle cx="806.9" cy="757.5" r="7.8" fill="#F2B712"/>
<text x="825.4" y="765.0" font-size="24.2" letter-spacing="0" fill="#3E3446">count(&#8201;)</text>
<circle cx="1965.2" cy="1301" r="7.8" fill="#444674"/>
<text x="1983.7" y="1308.5" font-size="24.2" letter-spacing="0" fill="#3E3446">Handled : count()</text>
<circle cx="2191.8" cy="1301" r="7.8" fill="#F2B712"/>
<text x="2210.3" y="1308.5" font-size="24.2" letter-spacing="0" fill="#3E3446">Unhandled : count()</text>
</g>
<g><rect x="39" y="95" width="62" height="16" rx="8" fill="#000" opacity="0.035"/><path d="M70,43.9 L48.5,65.5 Q43.9,70.2 43.9,75.5 Q43.9,80.8 48.5,85.5 L70,107.9 L91.5,85.5 Q96,80.8 96,75.5 Q96,70.2 91.5,65.5 Z" fill="#DCDB4B"/><path d="M70,43.9 Q75.5,49 73.8,55.5 Q72.5,60 70,64.3 L70,87.8 Q66,93 65.8,98.5 Q66,104 70,107.9 L91.5,85.5 Q96,80.8 96,75.5 Q96,70.2 91.5,65.5 Z" fill="#9EA548"/><path d="M70,64.3 L58.1,75.8 L70,80.7 L70,87.8 L81.8,76.3 L70,72 Z" fill="#44234F"/></g>
<g fill="none" stroke="#FFFFFF" stroke-width="3" stroke-linecap="round" stroke-linejoin="round" ><path d="M373,54 L382,63 L391,54"/></g>
<g fill="none" stroke="#9586A5" stroke-width="3.5" stroke-linecap="round" stroke-linejoin="round" ><path d="M52,159.8 L63.6,159.8 L70.5,165.8 L88.2,165.8 L88.2,195.9 L52,195.9 Z"/><path d="M64,176 L57.8,181.2 L64,186.6"/><path d="M76.3,176 L82.5,181.2 L76.3,186.6"/></g>
<g fill="none" stroke="#9586A5" stroke-width="3.5" stroke-linecap="round" stroke-linejoin="round" ><rect x="51.9" y="227.7" width="36.3" height="36" rx="6"/><path d="M52,234.6 H88.2"/><path d="M52,242.3 H61.3 V253.8 H79.7 V242.3 H88.2"/></g>
<g fill="none" stroke="#9586A5" stroke-width="3.5" stroke-linecap="round" stroke-linejoin="round" ><path d="M79.1,295.8 L56.5,312.6 L64.3,317.8 L57.8,331.6 L82,314.4 L73.6,309 Z"/></g>
<g fill="none" stroke="#9586A5" stroke-width="3.3" stroke-linecap="round" stroke-linejoin="round" ><rect x="52" y="377.5" width="36" height="23" rx="1.5"/><path d="M54.8,376.5 V370.5 H85.3 V376.5"/><path d="M57.8,370 V364 H82 V370"/></g>
<g fill="none" stroke="#9586A5" stroke-width="3.3" stroke-linecap="round" stroke-linejoin="round" ><path d="M58.5,455 V437 Q58.5,432.5 63,432.5 H77 Q81.5,432.5 81.5,437 V454"/><path d="M56.5,444 Q51.5,444.5 51.5,449 Q51.5,453.8 56.5,454"/><path d="M82.5,444 Q88.5,444.5 88.5,449 Q88.5,453.8 82.5,454"/><path d="M58.5,455 Q58.5,462 66,462"/><rect x="66" y="459.5" width="10.5" height="7.5" rx="1"/></g>
<g fill="none" stroke="#9586A5" stroke-width="3.2" stroke-linecap="round" stroke-linejoin="round" ><rect x="52.5" y="527.5" width="34.8" height="9" rx="1.5"/><path d="M57,527 L59,512 Q59.5,508.5 63,508.5 H76 Q79.5,508.5 80,512 L82,527"/><circle cx="69.2" cy="519.5" r="3"/><path d="M69.2,522.5 V527"/><path d="M69.2,498.5 V503"/><path d="M57,500 L59.5,504"/><path d="M81.5,500 L79,504"/><path d="M51,510.5 H56"/><path d="M83,510.5 H88"/></g>
<g fill="none" stroke="#9586A5" stroke-width="3.3" stroke-linecap="round" stroke-linejoin="round" ><path d="M51.5,587 L67,579.5 L71.5,588 L56,596 Z"/><path d="M66,579 L79,571 Q84,568 86,573 L88.5,578 Q90,582 85,584 L72,590"/><path d="M64,592 L59.5,604"/><path d="M64,592 L71,603.5"/></g>
<g fill="none" stroke="#FFFFFF" stroke-width="3.6" stroke-linecap="round" stroke-linejoin="round" ><rect x="51.9" y="635.6" width="13.8" height="36.6" rx="1.5"/><rect x="73.7" y="635.6" width="13.8" height="17.1" rx="1.5"/><rect x="73.7" y="661.8" width="13.8" height="10.4" rx="1.5"/></g>
<g fill="none" stroke="#9586A5" stroke-width="3.5" stroke-linecap="round" stroke-linejoin="round" ><path d="M59.5,738 H87.5"/><path d="M59.5,753.8 H87.5"/><path d="M59.5,769.5 H87.5"/></g>
<g fill="#9586A5"><circle cx="51.8" cy="738" r="2"/><circle cx="51.8" cy="753.8" r="2"/><circle cx="51.8" cy="769.5" r="2"/></g>
<g fill="none" stroke="#9586A5" stroke-width="3.3" stroke-linecap="round" stroke-linejoin="round" ><rect x="51.9" y="804" width="36.3" height="36" rx="5"/><path d="M58.4,837 V824.5"/><path d="M65.3,837 V821"/><path d="M72.6,837 V814.5"/><path d="M80.3,837 V808.5"/></g>
<g fill="none" stroke="#9586A5" stroke-width="3.3" stroke-linecap="round" stroke-linejoin="round" ><path d="M64.49,904.69 L68.01,903.99 L71.15,908.47 L73.81,908.99 L78.43,906.06 L81.41,908.05 L80.47,913.45 L81.97,915.69 L87.31,916.89 L88.01,920.41 L83.53,923.55 L83.01,926.21 L85.94,930.83 L83.95,933.81 L78.55,932.87 L76.31,934.37 L75.11,939.71 L71.59,940.41 L68.45,935.93 L65.79,935.41 L61.17,938.34 L58.19,936.35 L59.13,930.95 L57.63,928.71 L52.29,927.51 L51.59,923.99 L56.07,920.85 L56.59,918.19 L53.66,913.57 L55.65,910.59 L61.05,911.53 L63.29,910.03 Z"/><circle cx="69.8" cy="922.2" r="6"/></g>
<g fill="none" stroke="#9586A5" stroke-width="3.2" stroke-linecap="round" stroke-linejoin="round" ><circle cx="70.2" cy="2271.8" r="18.3"/><path d="M64.8,2266 Q64.8,2260 70.3,2260 Q75.8,2260 75.8,2265.5 Q75.8,2269 71.5,2270.5 Q70.2,2271.2 70.2,2273 V2274.5"/></g>
<circle cx="70.2" cy="2280.5" r="2.2" fill="#9586A5"/>
<g fill="none" stroke="#9586A5" stroke-width="3.2" stroke-linecap="round" stroke-linejoin="round" ><circle cx="70.2" cy="2340" r="3.2"/><path d="M61.5,2331 Q56.5,2340 61.5,2349"/><path d="M78.9,2331 Q83.9,2340 78.9,2349"/><path d="M54.5,2326 Q46.5,2340 54.5,2354"/><path d="M85.9,2326 Q93.9,2340 85.9,2354"/></g>
<g fill="none" stroke="#9586A5" stroke-width="3.2" stroke-linecap="round" stroke-linejoin="round" ><circle cx="70.2" cy="2439.8" r="18.3"/><path d="M74.1,2431.3 L64.5,2440 L74.1,2448.8"/></g>
<g fill="none" stroke="#80708F" stroke-width="2.8" stroke-linecap="round" stroke-linejoin="round" ><path d="M701.5,64.5 L710.5,73.5 L701.5,82.5"/></g>
<g fill="none" stroke="#3E3446" stroke-width="3" stroke-linecap="round" stroke-linejoin="round" ><path d="M2730.8,74.5 L2746.3,59 Q2748.8,56.5 2751.3,59 L2757,64.7 Q2759.5,67.2 2757,69.7 L2741.5,85.2 L2729.2,87.3 Z"/><path d="M2743.8,62 L2753.5,71.7"/><path d="M2732.5,73.3 L2742.5,83.3"/></g>
<g fill="none" stroke="#FFFFFF" stroke-width="3" stroke-linecap="round" stroke-linejoin="round" ><circle cx="3082" cy="72" r="15.5"/><path d="M3082,63.5 V80.5"/><path d="M3073.5,72 H3090.5"/></g>
<g fill="none" stroke="#3E3446" stroke-width="3" stroke-linecap="round" stroke-linejoin="round" ><path d="M535.8,309.6 L545.4,309.6 L550.1,314.3 L564.4,314.3 L564.4,338.1 L535.8,338.1 Z"/><path d="M545.4,322.1 L540.5,326.3 L545.4,330.6"/><path d="M554.8,322.1 L559.7,326.3 L554.8,330.6"/></g>
<g fill="none" stroke="#3E3446" stroke-width="2.8" stroke-linecap="round" stroke-linejoin="round" ><rect x="842.6" y="309.4" width="28.8" height="28.8" rx="4.5"/><path d="M842.6,318.5 H871.4"/></g>
<g fill="#3E3446"><circle cx="847.3" cy="314.3" r="1.6"/><circle cx="852" cy="314.3" r="1.6"/><circle cx="856.5" cy="314.3" r="1.6"/></g>
<g fill="none" stroke="#3E3446" stroke-width="2.8" stroke-linecap="round" stroke-linejoin="round" ><rect x="1222.6" y="312.4" width="28.8" height="25.8" rx="4.5"/><path d="M1222.6,321.1 H1251.4"/><path d="M1229.6,309 V315.5"/><path d="M1244.1,309 V315.5"/></g>
<g fill="none" stroke="#3E3446" stroke-width="2.8" stroke-linecap="round" stroke-linejoin="round" ><path d="M752.5,319.5 L761,328 L769.5,319.5"/></g>
<g fill="none" stroke="#3E3446" stroke-width="2.8" stroke-linecap="round" stroke-linejoin="round" ><path d="M1132.0,319.5 L1140.5,328 L1149.0,319.5"/></g>
<g fill="none" stroke="#3E3446" stroke-width="2.8" stroke-linecap="round" stroke-linejoin="round" ><path d="M1337.0,319.5 L1345.5,328 L1354.0,319.5"/></g>
<g fill="#3E3446"><circle cx="814.6" cy="450" r="2.7"/><circle cx="828" cy="450" r="2.7"/><circle cx="841.3" cy="450" r="2.7"/></g>
<g fill="none" stroke="#3E3446" stroke-width="2.9" stroke-linecap="butt" stroke-linejoin="miter" ><path d="M887.8,439.2 H881.5 V445.5"/><path d="M881.5,439.2 L887.8,445.5"/><path d="M895.9000000000001,439.2 H902.2 V445.5"/><path d="M902.2,439.2 L895.9000000000001,445.5"/><path d="M881.5,453.59999999999997 V459.9 H887.8"/><path d="M881.5,459.9 L887.8,453.59999999999997"/><path d="M902.2,453.59999999999997 V459.9 H895.9000000000001"/><path d="M902.2,459.9 L895.9000000000001,453.59999999999997"/></g>
<g fill="#3E3446"><circle cx="1758.6" cy="450" r="2.7"/><circle cx="1772" cy="450" r="2.7"/><circle cx="1785.3" cy="450" r="2.7"/></g>
<g fill="none" stroke="#3E3446" stroke-width="2.9" stroke-linecap="butt" stroke-linejoin="miter" ><path d="M1831.8,439.2 H1825.5 V445.5"/><path d="M1825.5,439.2 L1831.8,445.5"/><path d="M1839.9,439.2 H1846.2 V445.5"/><path d="M1846.2,439.2 L1839.9,445.5"/><path d="M1825.5,453.59999999999997 V459.9 H1831.8"/><path d="M1825.5,459.9 L1831.8,453.59999999999997"/><path d="M1846.2,453.59999999999997 V459.9 H1839.9"/><path d="M1846.2,459.9 L1839.9,453.59999999999997"/></g>
<g fill="#3E3446"><circle cx="3174.6" cy="450" r="2.7"/><circle cx="3188" cy="450" r="2.7"/><circle cx="3201.3" cy="450" r="2.7"/></g>
<g fill="none" stroke="#3E3446" stroke-width="2.9" stroke-linecap="butt" stroke-linejoin="miter" ><path d="M3247.8,439.2 H3241.5 V445.5"/><path d="M3241.5,439.2 L3247.8,445.5"/><path d="M3255.8999999999996,439.2 H3262.2 V445.5"/><path d="M3262.2,439.2 L3255.8999999999996,445.5"/><path d="M3241.5,453.59999999999997 V459.9 H3247.8"/><path d="M3241.5,459.9 L3247.8,453.59999999999997"/><path d="M3262.2,453.59999999999997 V459.9 H3255.8999999999996"/><path d="M3262.2,459.9 L3255.8999999999996,453.59999999999997"/></g>
<g fill="#3E3446"><circle cx="1758.6" cy="722" r="2.7"/><circle cx="1772" cy="722" r="2.7"/><circle cx="1785.3" cy="722" r="2.7"/></g>
<g fill="none" stroke="#3E3446" stroke-width="2.9" stroke-linecap="butt" stroke-linejoin="miter" ><path d="M1831.8,711.2 H1825.5 V717.5"/><path d="M1825.5,711.2 L1831.8,717.5"/><path d="M1839.9,711.2 H1846.2 V717.5"/><path d="M1846.2,711.2 L1839.9,717.5"/><path d="M1825.5,725.6000000000001 V731.9000000000001 H1831.8"/><path d="M1825.5,731.9000000000001 L1831.8,725.6000000000001"/><path d="M1846.2,725.6000000000001 V731.9000000000001 H1839.9"/><path d="M1846.2,731.9000000000001 L1839.9,725.6000000000001"/></g>
<g fill="#3E3446"><circle cx="1758.6" cy="1266" r="2.7"/><circle cx="1772" cy="1266" r="2.7"/><circle cx="1785.3" cy="1266" r="2.7"/></g>
<g fill="none" stroke="#3E3446" stroke-width="2.9" stroke-linecap="butt" stroke-linejoin="miter" ><path d="M1831.8,1255.2 H1825.5 V1261.5"/><path d="M1825.5,1255.2 L1831.8,1261.5"/><path d="M1839.9,1255.2 H1846.2 V1261.5"/><path d="M1846.2,1255.2 L1839.9,1261.5"/><path d="M1825.5,1269.6000000000001 V1275.9 H1831.8"/><path d="M1825.5,1275.9 L1831.8,1269.6000000000001"/><path d="M1846.2,1269.6000000000001 V1275.9 H1839.9"/><path d="M1846.2,1275.9 L1839.9,1269.6000000000001"/></g>
<g fill="#3E3446"><circle cx="3174.6" cy="1266" r="2.7"/><circle cx="3188" cy="1266" r="2.7"/><circle cx="3201.3" cy="1266" r="2.7"/></g>
<g fill="none" stroke="#3E3446" stroke-width="2.9" stroke-linecap="butt" stroke-linejoin="miter" ><path d="M3247.8,1255.2 H3241.5 V1261.5"/><path d="M3241.5,1255.2 L3247.8,1261.5"/><path d="M3255.8999999999996,1255.2 H3262.2 V1261.5"/><path d="M3262.2,1255.2 L3255.8999999999996,1261.5"/><path d="M3241.5,1269.6000000000001 V1275.9 H3247.8"/><path d="M3241.5,1275.9 L3247.8,1269.6000000000001"/><path d="M3262.2,1269.6000000000001 V1275.9 H3255.8999999999996"/><path d="M3262.2,1275.9 L3255.8999999999996,1269.6000000000001"/></g>
<g fill="#3E3446"><circle cx="3174.6" cy="1810" r="2.7"/><circle cx="3188" cy="1810" r="2.7"/><circle cx="3201.3" cy="1810" r="2.7"/></g>
<g fill="none" stroke="#3E3446" stroke-width="2.9" stroke-linecap="butt" stroke-linejoin="miter" ><path d="M3247.8,1799.2 H3241.5 V1805.5"/><path d="M3241.5,1799.2 L3247.8,1805.5"/><path d="M3255.8999999999996,1799.2 H3262.2 V1805.5"/><path d="M3262.2,1799.2 L3255.8999999999996,1805.5"/><path d="M3241.5,1813.6000000000001 V1819.9 H3247.8"/><path d="M3241.5,1819.9 L3247.8,1813.6000000000001"/><path d="M3262.2,1813.6000000000001 V1819.9 H3255.8999999999996"/><path d="M3262.2,1819.9 L3255.8999999999996,1813.6000000000001"/></g>
<path transform="translate(1868,2373) scale(1.28)" fill="#80708F" d="M29,2.26a4.67,4.67,0,0,0-8,0L14.42,13.53A32.21,32.21,0,0,1,32.17,40.19H27.550A27.68,27.68,0,0,0,12.09,17.47L6,28a15.92,15.92,0,0,1,9.23,12.17H4.62A.76.76,0,0,1,4,39.06l2.940-5a10.740,10.740,0,0,0-3.360-1.9l-2.910,5a4.540,4.540,0,0,0,1.690,6.240A4.660,4.660,0,0,0,4.620,44H19.150a19.400,19.400,0,0,0-8-17.310l2.310-4A23.870,23.870,0,0,1,23.760,44H36.070a35.880,35.880,0,0,0-16.410-31.800l4.670-8a.770.770,0,0,1,1.050-.270c.530.290,20.290,34.770,20.660,35.170a.760.760,0,0,1-.680,1.130H40.600q.090,1.910,0,3.810h4.780A4.590,4.590,0,0,0,50,39.430a4.490,4.490,0,0,0-.620-2.280Z"/>
</svg></body></html>
